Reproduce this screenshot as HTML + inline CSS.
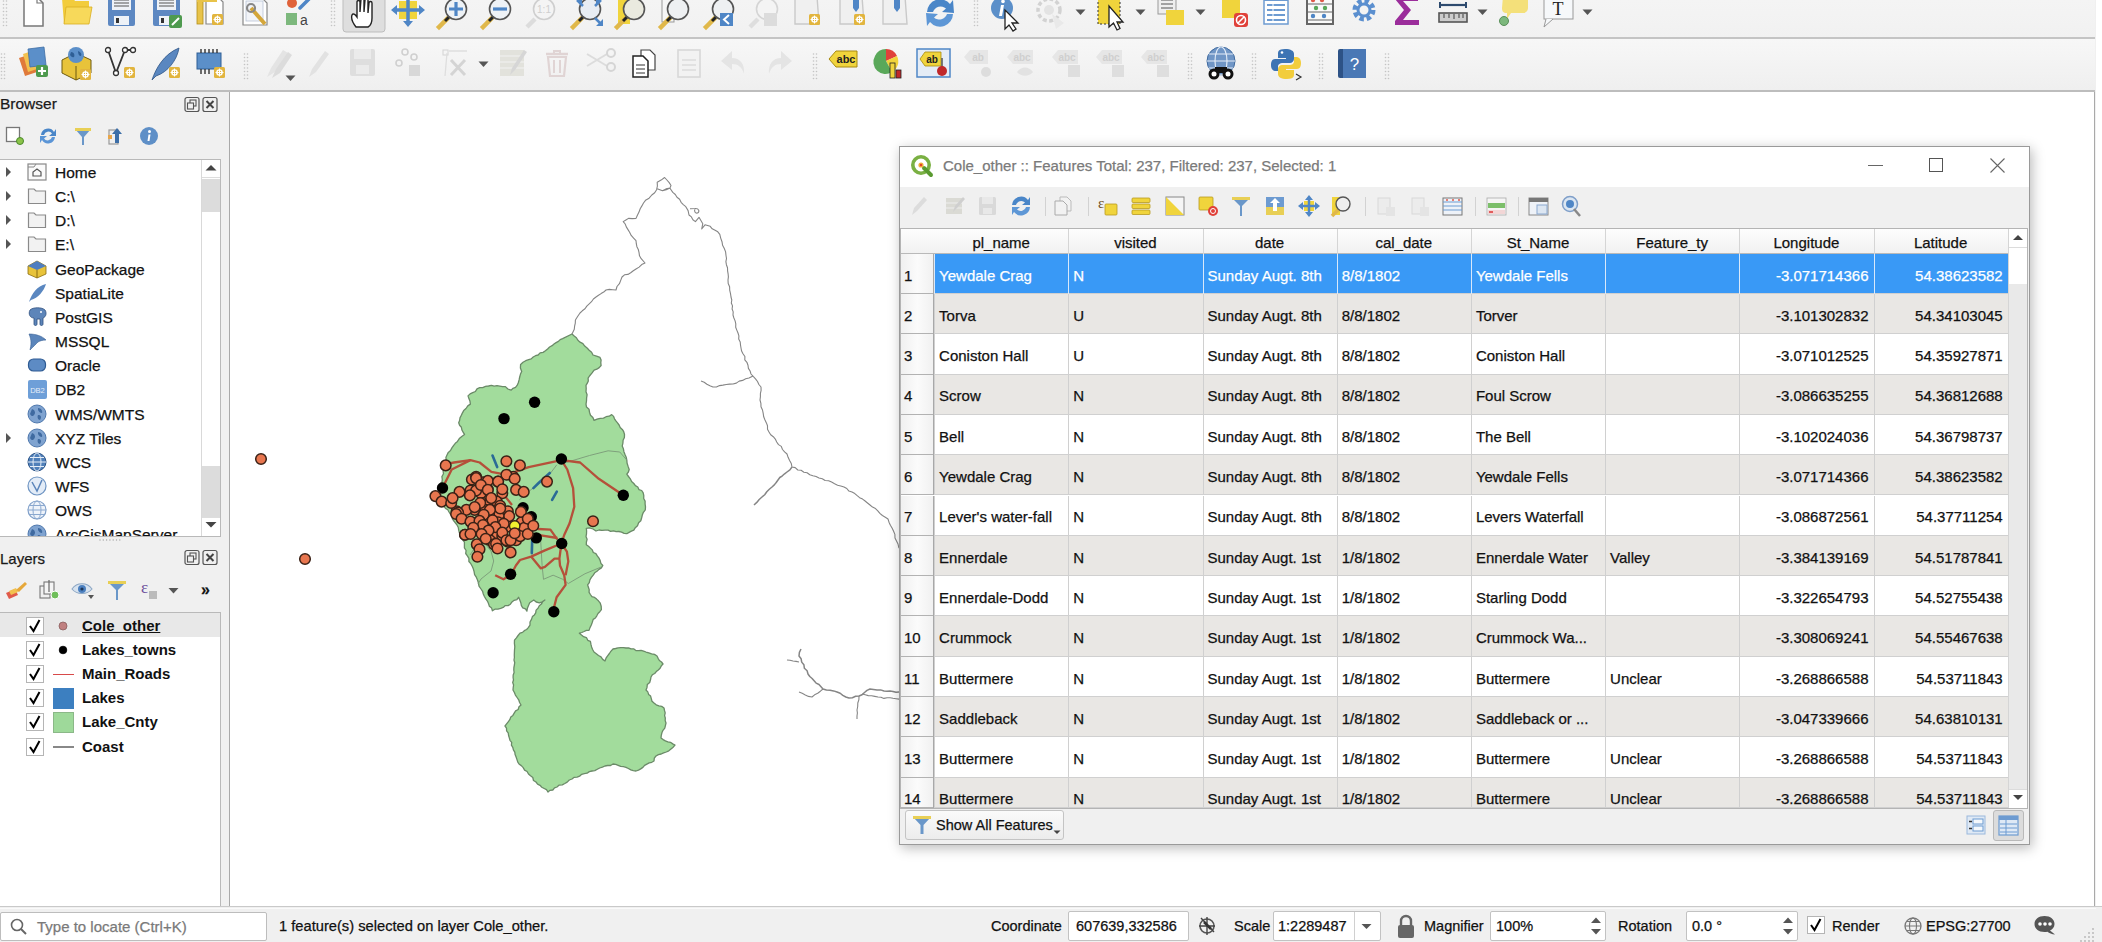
<!DOCTYPE html><html><head><meta charset="utf-8"><title>QGIS</title><style>
*{margin:0;padding:0;box-sizing:border-box}
html,body{width:2102px;height:942px;overflow:hidden;background:#f0f0f0;font-family:"Liberation Sans",sans-serif;font-size:15px;color:#000;position:relative}
.abs{position:absolute}
.t{position:absolute;white-space:nowrap;line-height:1;-webkit-text-stroke:0.25px currentColor}
svg{position:absolute;overflow:visible}
</style></head><body>
<div class="abs" style="left:0;top:0;width:2095px;height:38px;background:linear-gradient(#f4f4f4,#f1f1f1)"></div>
<div class="abs" style="left:0;top:37px;width:2095px;height:2px;background:#c4c4c4"></div>
<div class="abs" style="left:0;top:39px;width:2095px;height:51px;background:linear-gradient(#f7f7f7,#efefef)"></div>
<div class="abs" style="left:0;top:90px;width:2095px;height:2px;background:#bdbdbd"></div>
<div class="abs" style="left:2096px;top:0;width:6px;height:906px;background:#fff"></div>
<svg style="left:17px;top:0px" width="32" height="32"><path d="M7 -3 L20 -3 L26 3 L26 26 L7 26 Z" fill="#fff" stroke="#777" stroke-width="1.5"/><path d="M20 -3 L20 3 L26 3" fill="none" stroke="#777" stroke-width="1.2"/></svg>
<svg style="left:61px;top:0px" width="32" height="32"><path d="M1 -2 L12 -2 L14 1 L28 1 L28 24 L3 24 Z" fill="#f2cc3c"/><path d="M5 7 L31 7 L28 24 L3 24 Z" fill="#f7d95a" stroke="#d9ad1f" stroke-width="0.8"/></svg>
<svg style="left:105px;top:0px" width="32" height="32"><rect x="3" y="-4" width="27" height="30" rx="2" fill="#5d88c2"/><rect x="7" y="-4" width="19" height="14" fill="#eef2f7"/><path d="M9 0 L24 0 M9 3 L24 3 M9 6 L24 6" stroke="#555" stroke-width="1.1"/><rect x="9" y="16" width="15" height="9" fill="#eef2f7"/><rect x="11" y="18" width="3" height="5" fill="#333"/></svg>
<svg style="left:150px;top:0px" width="32" height="32"><rect x="3" y="-4" width="27" height="30" rx="2" fill="#5d88c2"/><rect x="7" y="-4" width="19" height="14" fill="#eef2f7"/><path d="M9 0 L24 0 M9 3 L24 3 M9 6 L24 6" stroke="#555" stroke-width="1.1"/><rect x="9" y="16" width="12" height="9" fill="#eef2f7"/><rect x="11" y="18" width="3" height="5" fill="#333"/><rect x="19" y="15" width="13" height="13" rx="2" fill="#4e9a4e"/><path d="M22 25 L29 18" stroke="#fff" stroke-width="2"/></svg>
<svg style="left:194px;top:0px" width="32" height="32"><path d="M12 -3 L24 -3 L29 2 L29 24 L12 24 Z" fill="#fff" stroke="#888" stroke-width="1.2"/><rect x="3" y="-4" width="6" height="28" fill="#e8c34a" stroke="#b48f1a" stroke-width="0.8"/><rect x="3" y="-4" width="20" height="6" fill="#e8c34a"/><rect x="18" y="14" width="11" height="11" rx="1.5" fill="#e2b53e"/><circle cx="23.5" cy="19.5" r="2.6" fill="none" stroke="#fff" stroke-width="1.4"/><path d="M23.5 15.5 L23.5 23.5 M19.5 19.5 L27.5 19.5" stroke="#fff" stroke-width="1"/></svg>
<svg style="left:239px;top:0px" width="32" height="32"><path d="M4 -3 L22 -3 L28 3 L28 25 L4 25 Z" fill="#fff" stroke="#888" stroke-width="1.2"/><rect x="7" y="1" width="17" height="20" fill="#f2f4f8" stroke="#b8c4d4" stroke-width="0.8"/><path d="M12 8 L26 24" stroke="#d4a63a" stroke-width="4"/><circle cx="12" cy="8" r="4" fill="none" stroke="#888" stroke-width="2.2"/></svg>
<svg style="left:282px;top:0px" width="32" height="32"><circle cx="10" cy="3" r="5" fill="#e0623a"/><path d="M18 8 L28 -2" stroke="#4f86c6" stroke-width="3.5" stroke-linecap="round"/><rect x="4" y="13" width="11" height="12" fill="#7db87d"/><text x="18" y="25" font-size="14" fill="#444" font-family="Liberation Sans">a</text></svg>
<svg style="left:347px;top:0px" width="32" height="32"><rect x="-4" y="-16" width="42" height="48" rx="3" fill="#dedede" stroke="#bdbdbd"/><path d="M9 27 C5 22 4 18 5 15 C6 13 8 14 10 17 L10 2 C10 0 13 0 13 2 L13 12 L14 -1 C14 -3 17 -3 17 -1 L17 12 L18 0 C18 -2 21 -2 21 0 L21 13 L22 3 C22 1 25 1 25 3 L25 18 C25 23 23 26 21 27 Z" fill="#fff" stroke="#222" stroke-width="1.4"/></svg>
<svg style="left:392px;top:0px" width="32" height="32"><rect x="7" y="1" width="18" height="18" fill="#f0d43c"/><path d="M16 -7 L21 -1 L11 -1 Z M16 27 L21 21 L11 21 Z M-1 10 L5 5 L5 15 Z M33 10 L27 5 L27 15 Z" fill="#4f86c6"/><path d="M16 -2 L16 22 M3 10 L29 10" stroke="#4f86c6" stroke-width="3.5"/></svg>
<svg style="left:436px;top:0px" width="32" height="32"><path d="M3 27 L11 19" stroke="#e0b84a" stroke-width="4.5" stroke-linecap="square"/><path d="M9 21 L13 17" stroke="#222" stroke-width="3"/><circle cx="20" cy="9" r="10.5" fill="#eef2f6" stroke="#555" stroke-width="1.6"/><path d="M20 2 L20 16 M13 9 L27 9" stroke="#4f86c6" stroke-width="3.2"/></svg>
<svg style="left:480px;top:0px" width="32" height="32"><path d="M3 27 L11 19" stroke="#e0b84a" stroke-width="4.5" stroke-linecap="square"/><path d="M9 21 L13 17" stroke="#222" stroke-width="3"/><circle cx="20" cy="9" r="10.5" fill="#eef2f6" stroke="#555" stroke-width="1.6"/><path d="M13 9 L27 9" stroke="#4f86c6" stroke-width="3.2"/></svg>
<svg style="left:524px;top:0px" width="32" height="32"><path d="M3 27 L11 19" stroke="#dcdcdc" stroke-width="4.5"/><circle cx="20" cy="9" r="10.5" fill="#f4f4f4" stroke="#cfcfcf" stroke-width="1.6"/><text x="20" y="13" font-size="10" text-anchor="middle" fill="#cfcfcf" font-family="Liberation Sans">1:1</text></svg>
<svg style="left:570px;top:0px" width="32" height="32"><path d="M3 27 L11 19" stroke="#e0b84a" stroke-width="4.5" stroke-linecap="square"/><path d="M9 21 L13 17" stroke="#222" stroke-width="3"/><circle cx="20" cy="9" r="10.5" fill="#e8edf3" stroke="#555" stroke-width="1.6"/><path d="M5 -2 L12 -2 L12 5 Z M33 -2 L26 -2 L26 5 Z M33 26 L26 26 L33 19 Z" fill="#4f86c6"/><path d="M7 0 L13 6 M31 0 L25 6 M31 24 L25 18" stroke="#4f86c6" stroke-width="2.5"/></svg>
<svg style="left:614px;top:0px" width="32" height="32"><rect x="4" y="-4" width="12" height="28" fill="#f0d43c"/><path d="M3 27 L11 19" stroke="#e0b84a" stroke-width="4.5" stroke-linecap="square"/><path d="M9 21 L13 17" stroke="#222" stroke-width="3"/><circle cx="20" cy="9" r="10.5" fill="#eaeadf" stroke="#555" stroke-width="1.6"/></svg>
<svg style="left:658px;top:0px" width="32" height="32"><rect x="4" y="-4" width="12" height="26" fill="#f6f6f6" stroke="#999"/><path d="M3 27 L11 19" stroke="#e0b84a" stroke-width="4.5" stroke-linecap="square"/><path d="M9 21 L13 17" stroke="#222" stroke-width="3"/><circle cx="20" cy="9" r="10.5" fill="#eef0f2" stroke="#555" stroke-width="1.6"/></svg>
<svg style="left:703px;top:0px" width="32" height="32"><path d="M3 27 L11 19" stroke="#e0b84a" stroke-width="4.5" stroke-linecap="square"/><path d="M9 21 L13 17" stroke="#222" stroke-width="3"/><circle cx="20" cy="9" r="10.5" fill="#eef0f2" stroke="#555" stroke-width="1.6"/><rect x="17" y="13" width="13" height="13" fill="#4f86c6"/><path d="M26 15 L21 19.5 L26 24" fill="none" stroke="#fff" stroke-width="2"/></svg>
<svg style="left:747px;top:0px" width="32" height="32"><path d="M3 27 L11 19" stroke="#dedede" stroke-width="4.5"/><circle cx="20" cy="9" r="10.5" fill="#f4f4f4" stroke="#d5d5d5" stroke-width="1.6"/><rect x="17" y="13" width="13" height="13" fill="#dcdcdc"/></svg>
<svg style="left:792px;top:0px" width="32" height="32"><path d="M3 -4 L25 -4 L27 24 L3 24 Z" fill="#f0f0f0" stroke="#c9c9c9" stroke-width="1.4"/><rect x="17" y="14" width="11" height="11" rx="1.5" fill="#e2b53e"/><circle cx="22.5" cy="19.5" r="2.6" fill="none" stroke="#fff" stroke-width="1.4"/><path d="M22.5 15.5 L22.5 23.5 M18.5 19.5 L26.5 19.5" stroke="#fff" stroke-width="1"/></svg>
<svg style="left:837px;top:0px" width="32" height="32"><path d="M3 -4 L25 -4 L27 24 L3 24 Z" fill="#f0f0f0" stroke="#c9c9c9" stroke-width="1.4"/><path d="M16 -4 L16 8 L19 12 L22 8 L22 -4 Z" fill="#4f86c6"/><rect x="17" y="14" width="11" height="11" rx="1.5" fill="#e2b53e"/><circle cx="22.5" cy="19.5" r="2.6" fill="none" stroke="#fff" stroke-width="1.4"/><path d="M22.5 15.5 L22.5 23.5 M18.5 19.5 L26.5 19.5" stroke="#fff" stroke-width="1"/></svg>
<svg style="left:880px;top:0px" width="32" height="32"><path d="M3 -4 L25 -4 L27 24 L3 24 Z" fill="#f0f0f0" stroke="#c9c9c9" stroke-width="1.4"/><path d="M14 -4 L14 8 L17 12 L20 8 L20 -4 Z" fill="#4f86c6"/></svg>
<svg style="left:924px;top:0px" width="32" height="32"><path d="M3 12 A13 13 0 0 1 26 4 L29 0 L30 13 L18 12 L22 8.5 A8 8 0 0 0 9 12 Z" fill="#4a86c8"/><path d="M29 14 A13 13 0 0 1 6 22 L3 26 L2 13 L14 14 L10 17.5 A8 8 0 0 0 23 14 Z" fill="#5e97d6"/></svg>
<svg style="left:989px;top:0px" width="32" height="32"><circle cx="13" cy="8" r="11" fill="#5b8fc9"/><path d="M12 5 L15 5 L13 16 L10 16 Z" fill="#fff"/><circle cx="14" cy="1.5" r="1.8" fill="#fff"/><path d="M16 10 L16 29 L20 25 L24 31 L27 29 L23 23 L29 23 Z" fill="#fff" stroke="#222" stroke-width="1.3"/></svg>
<svg style="left:1034px;top:0px" width="32" height="32"><circle cx="15" cy="10" r="11" fill="none" stroke="#d2d2d2" stroke-width="3.5" stroke-dasharray="4 2.5"/><circle cx="15" cy="10" r="5" fill="#e3e3e3"/><path d="M18 14 L22 29 L30 23 Z" fill="#e9e9e9"/></svg>
<svg style="left:1095px;top:0px" width="32" height="32"><rect x="3" y="-4" width="22" height="28" fill="#f0d43c" stroke="#333" stroke-width="1" stroke-dasharray="2 2"/><path d="M14 6 L14 27 L18.5 23 L22 30 L25 28.5 L22 22 L28 22 Z" fill="#fff" stroke="#222" stroke-width="1.3"/></svg>
<svg style="left:1156px;top:0px" width="32" height="32"><rect x="2" y="-4" width="18" height="18" fill="#eee" stroke="#999"/><path d="M5 0 L17 0 M5 4 L17 4 M5 8 L17 8" stroke="#888" stroke-width="1.6"/><rect x="10" y="10" width="18" height="15" fill="#f0d43c"/></svg>
<svg style="left:1217px;top:0px" width="32" height="32"><rect x="5" y="-4" width="18" height="22" fill="#f0d43c"/><rect x="17" y="13" width="14" height="14" rx="3" fill="#e0413a"/><circle cx="24" cy="20" r="4.5" fill="none" stroke="#fff" stroke-width="1.6"/><path d="M21 23 L27 17" stroke="#fff" stroke-width="1.6"/></svg>
<svg style="left:1260px;top:0px" width="32" height="32"><rect x="4" y="-4" width="24" height="28" fill="#fff" stroke="#6d9bd1" stroke-width="1.5"/><rect x="4" y="-4" width="24" height="5" fill="#6d9bd1"/><path d="M7 5 L25 5 M7 10 L25 10 M7 15 L25 15 M7 20 L25 20" stroke="#6d9bd1" stroke-width="2"/><path d="M13 3 L13 23" stroke="#fff" stroke-width="1"/></svg>
<svg style="left:1304px;top:0px" width="32" height="32"><rect x="3" y="-4" width="26" height="28" fill="#fafafa" stroke="#666" stroke-width="2"/><path d="M3 4 L29 4 M3 12 L29 12 M3 20 L29 20" stroke="#666" stroke-width="1"/><circle cx="9" cy="0" r="2.2" fill="#e05a4a"/><circle cx="18" cy="0" r="2.2" fill="#e05a4a"/><circle cx="12" cy="8" r="2.2" fill="#5aa85a"/><circle cx="21" cy="8" r="2.2" fill="#5aa85a"/><circle cx="9" cy="16" r="2.2" fill="#4f86c6"/><circle cx="20" cy="16" r="2.2" fill="#4f86c6"/></svg>
<svg style="left:1348px;top:0px" width="32" height="32"><circle cx="16" cy="10" r="9" fill="none" stroke="#5b8fcf" stroke-width="5" stroke-dasharray="4.3 2.8"/><circle cx="16" cy="10" r="6" fill="none" stroke="#5b8fcf" stroke-width="3"/></svg>
<svg style="left:1392px;top:0px" width="32" height="32"><path d="M3 -4 L26 -4 L26 1 L11 1 L19 10 L11 20 L27 20 L27 25 L3 25 L3 21 L12 10 L3 -1 Z" fill="#9b2d9b"/></svg>
<svg style="left:1437px;top:0px" width="32" height="32"><path d="M3 5 L29 5" stroke="#2d4a6e" stroke-width="2.2"/><path d="M3 2 L3 8 M29 2 L29 8" stroke="#2d4a6e" stroke-width="2"/><rect x="2" y="13" width="28" height="9" fill="#ccc" stroke="#555" stroke-width="1.6"/><path d="M7 14 L7 18 M12 14 L12 18 M17 14 L17 19 M22 14 L22 18 M26 14 L26 18" stroke="#555" stroke-width="1.2"/></svg>
<svg style="left:1497px;top:0px" width="32" height="32"><path d="M6 -4 L28 -4 C31 -4 31 -2 31 0 L31 8 C31 11 29 13 26 13 L14 13 L10 19 L10 13 C6 13 5 11 5 8 Z" fill="#f4e07a"/><circle cx="7" cy="21" r="4.5" fill="#7db87d" stroke="#5a8f5a"/></svg>
<svg style="left:1541px;top:0px" width="32" height="32"><rect x="3" y="-4" width="29" height="23" fill="#f6f8fa" stroke="#999" stroke-width="1"/><path d="M5 19 L3 27 L12 19" fill="#f6f8fa" stroke="#999"/><text x="17" y="15" font-size="18" text-anchor="middle" fill="#222" font-family="Liberation Serif">T</text></svg>
<svg style="left:1075px;top:9px" width="11" height="7"><path d="M0.5 0.5 L10.5 0.5 L5.5 6 Z" fill="#555"/></svg>
<svg style="left:1135px;top:9px" width="11" height="7"><path d="M0.5 0.5 L10.5 0.5 L5.5 6 Z" fill="#555"/></svg>
<svg style="left:1195px;top:9px" width="11" height="7"><path d="M0.5 0.5 L10.5 0.5 L5.5 6 Z" fill="#555"/></svg>
<svg style="left:1477px;top:9px" width="11" height="7"><path d="M0.5 0.5 L10.5 0.5 L5.5 6 Z" fill="#555"/></svg>
<svg style="left:1582px;top:9px" width="11" height="7"><path d="M0.5 0.5 L10.5 0.5 L5.5 6 Z" fill="#555"/></svg>
<svg style="left:2px;top:0px" width="6" height="30"><circle cx="1.5" cy="1.0" r="0.8" fill="#c4c4c4"/><circle cx="4.5" cy="1.0" r="0.8" fill="#c4c4c4"/><circle cx="1.5" cy="4.5" r="0.8" fill="#c4c4c4"/><circle cx="4.5" cy="4.5" r="0.8" fill="#c4c4c4"/><circle cx="1.5" cy="8.0" r="0.8" fill="#c4c4c4"/><circle cx="4.5" cy="8.0" r="0.8" fill="#c4c4c4"/><circle cx="1.5" cy="11.5" r="0.8" fill="#c4c4c4"/><circle cx="4.5" cy="11.5" r="0.8" fill="#c4c4c4"/><circle cx="1.5" cy="15.0" r="0.8" fill="#c4c4c4"/><circle cx="4.5" cy="15.0" r="0.8" fill="#c4c4c4"/><circle cx="1.5" cy="18.5" r="0.8" fill="#c4c4c4"/><circle cx="4.5" cy="18.5" r="0.8" fill="#c4c4c4"/><circle cx="1.5" cy="22.0" r="0.8" fill="#c4c4c4"/><circle cx="4.5" cy="22.0" r="0.8" fill="#c4c4c4"/><circle cx="1.5" cy="25.5" r="0.8" fill="#c4c4c4"/><circle cx="4.5" cy="25.5" r="0.8" fill="#c4c4c4"/></svg>
<svg style="left:330px;top:0px" width="6" height="30"><circle cx="1.5" cy="1.0" r="0.8" fill="#c4c4c4"/><circle cx="4.5" cy="1.0" r="0.8" fill="#c4c4c4"/><circle cx="1.5" cy="4.5" r="0.8" fill="#c4c4c4"/><circle cx="4.5" cy="4.5" r="0.8" fill="#c4c4c4"/><circle cx="1.5" cy="8.0" r="0.8" fill="#c4c4c4"/><circle cx="4.5" cy="8.0" r="0.8" fill="#c4c4c4"/><circle cx="1.5" cy="11.5" r="0.8" fill="#c4c4c4"/><circle cx="4.5" cy="11.5" r="0.8" fill="#c4c4c4"/><circle cx="1.5" cy="15.0" r="0.8" fill="#c4c4c4"/><circle cx="4.5" cy="15.0" r="0.8" fill="#c4c4c4"/><circle cx="1.5" cy="18.5" r="0.8" fill="#c4c4c4"/><circle cx="4.5" cy="18.5" r="0.8" fill="#c4c4c4"/><circle cx="1.5" cy="22.0" r="0.8" fill="#c4c4c4"/><circle cx="4.5" cy="22.0" r="0.8" fill="#c4c4c4"/><circle cx="1.5" cy="25.5" r="0.8" fill="#c4c4c4"/><circle cx="4.5" cy="25.5" r="0.8" fill="#c4c4c4"/></svg>
<svg style="left:973px;top:0px" width="6" height="30"><circle cx="1.5" cy="1.0" r="0.8" fill="#c4c4c4"/><circle cx="4.5" cy="1.0" r="0.8" fill="#c4c4c4"/><circle cx="1.5" cy="4.5" r="0.8" fill="#c4c4c4"/><circle cx="4.5" cy="4.5" r="0.8" fill="#c4c4c4"/><circle cx="1.5" cy="8.0" r="0.8" fill="#c4c4c4"/><circle cx="4.5" cy="8.0" r="0.8" fill="#c4c4c4"/><circle cx="1.5" cy="11.5" r="0.8" fill="#c4c4c4"/><circle cx="4.5" cy="11.5" r="0.8" fill="#c4c4c4"/><circle cx="1.5" cy="15.0" r="0.8" fill="#c4c4c4"/><circle cx="4.5" cy="15.0" r="0.8" fill="#c4c4c4"/><circle cx="1.5" cy="18.5" r="0.8" fill="#c4c4c4"/><circle cx="4.5" cy="18.5" r="0.8" fill="#c4c4c4"/><circle cx="1.5" cy="22.0" r="0.8" fill="#c4c4c4"/><circle cx="4.5" cy="22.0" r="0.8" fill="#c4c4c4"/><circle cx="1.5" cy="25.5" r="0.8" fill="#c4c4c4"/><circle cx="4.5" cy="25.5" r="0.8" fill="#c4c4c4"/></svg>
<svg style="left:17px;top:48px" width="32" height="32"><path d="M2 10 L14 6 L20 24 L8 28 Z" fill="#e07a3a"/><path d="M6 6 L18 2 L23 20 L11 24 Z" fill="#f2c14e"/><path d="M11 1 L27 -1 L29 17 L13 19 Z" fill="#5b8fc9" stroke="#3e6da5" stroke-width="0.8"/><rect x="19" y="17" width="12" height="12" rx="2" fill="#4e9a4e"/><path d="M25 19 L25 27 M21 23 L29 23" stroke="#fff" stroke-width="2.2"/></svg>
<svg style="left:61px;top:48px" width="32" height="32"><path d="M1 12 L15 5 L30 12 L30 25 L15 32 L1 25 Z" fill="#e8c33a" stroke="#6d5a10" stroke-width="1"/><path d="M15 18 L15 32" stroke="#6d5a10" stroke-width="1"/><circle cx="15" cy="7" r="8" fill="#5b8fc9"/><path d="M10 4 C13 4 14 7 13 9 C11 10 10 8 9 7 Z M17 3 C20 4 21 6 20 8 C18 8 17 6 17 3 Z" fill="#2e5e95"/><rect x="19" y="21" width="11" height="11" rx="1.5" fill="#e2b53e"/><circle cx="24.5" cy="26.5" r="2.6" fill="none" stroke="#fff" stroke-width="1.4"/><path d="M24.5 22.5 L24.5 30.5 M20.5 26.5 L28.5 26.5" stroke="#fff" stroke-width="1"/></svg>
<svg style="left:105px;top:48px" width="32" height="32"><path d="M3 2 L11 25 L20 2 L28 2" fill="none" stroke="#333" stroke-width="1.8"/><circle cx="3" cy="2" r="2.5" fill="#fff" stroke="#333" stroke-width="1.3"/><circle cx="11" cy="25" r="2.5" fill="#fff" stroke="#333" stroke-width="1.3"/><circle cx="20" cy="2" r="2.5" fill="#fff" stroke="#333" stroke-width="1.3"/><circle cx="28" cy="2" r="2.5" fill="#fff" stroke="#333" stroke-width="1.3"/><rect x="19" y="19" width="11" height="11" rx="1.5" fill="#e2b53e"/><circle cx="24.5" cy="24.5" r="2.6" fill="none" stroke="#fff" stroke-width="1.4"/><path d="M24.5 20.5 L24.5 28.5 M20.5 24.5 L28.5 24.5" stroke="#fff" stroke-width="1"/></svg>
<svg style="left:150px;top:48px" width="32" height="32"><path d="M2 32 C6 20 14 6 29 0 C27 12 18 24 6 28 Z" fill="#5a87c0" stroke="#2e5687" stroke-width="0.8"/><rect x="19" y="19" width="11" height="11" rx="1.5" fill="#e2b53e"/><circle cx="24.5" cy="24.5" r="2.6" fill="none" stroke="#fff" stroke-width="1.4"/><path d="M24.5 20.5 L24.5 28.5 M20.5 24.5 L28.5 24.5" stroke="#fff" stroke-width="1"/></svg>
<svg style="left:195px;top:48px" width="32" height="32"><rect x="2" y="5" width="24" height="16" fill="#5b8fc9" stroke="#2e5e95" stroke-width="1"/><path d="M6 1 L6 5 M10 1 L10 5 M14 1 L14 5 M18 1 L18 5 M22 1 L22 5 M6 21 L6 26 M10 21 L10 26 M14 21 L14 26" stroke="#333" stroke-width="1.4"/><rect x="19" y="19" width="11" height="11" rx="1.5" fill="#e2b53e"/><circle cx="24.5" cy="24.5" r="2.6" fill="none" stroke="#fff" stroke-width="1.4"/><path d="M24.5 20.5 L24.5 28.5 M20.5 24.5 L28.5 24.5" stroke="#fff" stroke-width="1"/></svg>
<svg style="left:261px;top:48px" width="32" height="32"><path d="M6 29 L10 20 L22 2 L27 5 L14 24 Z" fill="#e4e4e4"/><path d="M11 30 L15 21 L27 4 L31 7 L19 25 Z" fill="#dcdcdc"/></svg>
<svg style="left:303px;top:48px" width="32" height="32"><path d="M6 29 L9 21 L22 3 L26 6 L13 24 Z" fill="#e2e2e2"/></svg>
<svg style="left:347px;top:48px" width="32" height="32"><rect x="3" y="1" width="25" height="27" rx="2" fill="#dedede"/><rect x="7" y="1" width="17" height="10" fill="#ebebeb"/><rect x="9" y="17" width="13" height="9" fill="#ebebeb"/></svg>
<svg style="left:392px;top:48px" width="32" height="32"><circle cx="13" cy="4" r="3" fill="none" stroke="#d0d0d0" stroke-width="1.6"/><circle cx="22" cy="9" r="3" fill="none" stroke="#d0d0d0" stroke-width="1.6"/><circle cx="7" cy="15" r="3" fill="none" stroke="#d0d0d0" stroke-width="1.6"/><rect x="17" y="17" width="11" height="11" fill="#d8d8d8"/></svg>
<svg style="left:439px;top:48px" width="32" height="32"><rect x="4" y="2" width="5" height="5" fill="none" stroke="#d4d4d4"/><path d="M6 28 L8 5 M10 3 L28 3" stroke="#dedede" stroke-width="1.3"/><path d="M12 12 L26 27 M26 12 L12 27" stroke="#d4d4d4" stroke-width="3"/></svg>
<svg style="left:497px;top:48px" width="32" height="32"><rect x="3" y="2" width="24" height="26" fill="#e2e2dc"/><path d="M3 8 L27 8 M3 14 L27 14 M3 20 L27 20" stroke="#f2f2f2" stroke-width="1.2"/><path d="M13 27 L15 20 L27 2 L30 4 L18 22 Z" fill="#d6d6d6"/></svg>
<svg style="left:541px;top:48px" width="32" height="32"><path d="M5 6 L27 6" stroke="#e0d4d4" stroke-width="2.5"/><path d="M13 6 L13 3 L19 3 L19 6" fill="none" stroke="#e0d4d4" stroke-width="2"/><path d="M7 9 L9 28 L23 28 L25 9 Z" fill="none" stroke="#e0d4d4" stroke-width="2.2"/><path d="M13 12 L13 25 M19 12 L19 25" stroke="#e0d4d4" stroke-width="2"/></svg>
<svg style="left:585px;top:48px" width="32" height="32"><path d="M2 6 L22 18 M2 18 L22 6" stroke="#dcdcdc" stroke-width="2"/><circle cx="26" cy="5" r="4" fill="none" stroke="#d5d5d5" stroke-width="2"/><circle cx="26" cy="19" r="4" fill="none" stroke="#d5d5d5" stroke-width="2"/></svg>
<svg style="left:629px;top:48px" width="32" height="32"><path d="M12 2 L21 2 L26 7 L26 22 L12 22 Z" fill="#fff" stroke="#444" stroke-width="1.2"/><path d="M4 8 L14 8 L19 13 L19 29 L4 29 Z" fill="#fff" stroke="#222" stroke-width="1.5"/><path d="M7 17 L16 17 M7 21 L16 21 M7 25 L16 25" stroke="#333" stroke-width="1.1"/></svg>
<svg style="left:674px;top:48px" width="32" height="32"><rect x="4" y="2" width="22" height="27" fill="#f2f2f2" stroke="#d8d8d8" stroke-width="1.6"/><path d="M8 12 L22 12 M8 17 L22 17 M8 22 L22 22" stroke="#dcdcdc" stroke-width="1.3"/></svg>
<svg style="left:718px;top:48px" width="32" height="32"><path d="M14 3 L3 13 L14 22 L14 16 C20 16 24 19 26 26 C27 16 22 10 14 10 Z" fill="#e4e4e4"/></svg>
<svg style="left:763px;top:48px" width="32" height="32"><path d="M18 3 L29 13 L18 22 L18 16 C12 16 8 19 6 26 C5 16 10 10 18 10 Z" fill="#e4e4e4"/></svg>
<svg style="left:827px;top:48px" width="32" height="32"><path d="M2 11 L9 3 L30 3 L30 19 L9 19 Z" fill="#f0d43c" stroke="#a88a10" stroke-width="1"/><text x="19" y="15" font-size="11" font-weight="bold" text-anchor="middle" fill="#222" font-family="Liberation Sans">abc</text></svg>
<svg style="left:872px;top:48px" width="32" height="32"><path d="M14 13 L14 1 A12 12 0 0 1 25 8 Z" fill="#e0413a"/><path d="M14 13 L25 8 A12 12 0 0 1 20 24 Z" fill="#f0d43c"/><path d="M14 13 L20 24 A12 12 0 0 1 3 8 A12 12 0 0 1 14 1 Z" fill="#5aa85a"/><rect x="18" y="15" width="5" height="15" fill="#f0d43c" stroke="#222" stroke-width="0.8"/><rect x="24" y="22" width="5" height="8" fill="#c0282a" stroke="#222" stroke-width="0.8"/></svg>
<svg style="left:917px;top:48px" width="32" height="32"><rect x="0" y="1" width="33" height="28" fill="#e4ecf6" stroke="#4f86c6" stroke-width="1.5"/><path d="M3 11 L8 4 L24 4 L24 18 L8 18 Z" fill="#f0d43c" stroke="#a88a10" stroke-width="0.8"/><text x="15" y="15" font-size="10" font-weight="bold" text-anchor="middle" fill="#222" font-family="Liberation Sans">ab</text><path d="M25 10 L25 20" stroke="#555" stroke-width="1.5"/><circle cx="25" cy="23" r="5" fill="#c0282a"/></svg>
<svg style="left:962px;top:48px" width="32" height="32"><path d="M2 9 L8 2 L26 2 L26 16 L8 16 Z" fill="#e6e6e6"/><text x="16" y="13" font-size="10" font-weight="bold" text-anchor="middle" fill="#cfcfcf" font-family="Liberation Sans">ab</text><circle cx="24" cy="24" r="5" fill="#ddd"/></svg>
<svg style="left:1005px;top:48px" width="32" height="32"><path d="M2 9 L8 2 L28 2 L28 16 L8 16 Z" fill="#e6e6e6"/><text x="17" y="13" font-size="10" font-weight="bold" text-anchor="middle" fill="#cfcfcf" font-family="Liberation Sans">abc</text><path d="M12 24 C16 18 24 18 28 24 C24 29 16 29 12 24 Z" fill="#e2e2e2"/></svg>
<svg style="left:1050px;top:48px" width="32" height="32"><path d="M2 9 L8 2 L28 2 L28 16 L8 16 Z" fill="#e6e6e6"/><text x="17" y="13" font-size="10" font-weight="bold" text-anchor="middle" fill="#cfcfcf" font-family="Liberation Sans">abc</text><rect x="18" y="17" width="12" height="12" fill="#dedede"/></svg>
<svg style="left:1094px;top:48px" width="32" height="32"><path d="M2 9 L8 2 L28 2 L28 16 L8 16 Z" fill="#e6e6e6"/><text x="17" y="13" font-size="10" font-weight="bold" text-anchor="middle" fill="#cfcfcf" font-family="Liberation Sans">abc</text><rect x="18" y="17" width="12" height="12" fill="#dedede"/></svg>
<svg style="left:1139px;top:48px" width="32" height="32"><path d="M2 9 L8 2 L28 2 L28 16 L8 16 Z" fill="#e6e6e6"/><text x="17" y="13" font-size="10" font-weight="bold" text-anchor="middle" fill="#cfcfcf" font-family="Liberation Sans">abc</text><rect x="18" y="17" width="12" height="12" fill="#dedede"/></svg>
<svg style="left:1205px;top:48px" width="32" height="32"><circle cx="16" cy="13" r="14" fill="#7096c6" stroke="#3f6a9f" stroke-width="1"/><ellipse cx="16" cy="13" rx="6" ry="14" fill="none" stroke="#e3ecf7" stroke-width="1.2"/><path d="M2 13 L30 13 M4 6 L28 6 M4 20 L28 20" stroke="#e3ecf7" stroke-width="1.2"/><circle cx="9" cy="26" r="5.5" fill="#111"/><circle cx="23" cy="26" r="5.5" fill="#111"/><rect x="10" y="19" width="12" height="6" fill="#111"/><circle cx="9" cy="26" r="2.5" fill="#fff"/><circle cx="23" cy="26" r="2.5" fill="#fff"/></svg>
<svg style="left:1270px;top:48px" width="32" height="32"><path d="M15 1 C8 1 8 4 8 6 L8 10 L16 10 L16 11 L5 11 C2 11 1 14 1 17 C1 21 3 23 6 23 L8 23 L8 19 C8 16 10 15 13 15 L20 15 C22 15 24 13 24 11 L24 6 C24 3 21 1 15 1 Z" fill="#3d74b4"/><path d="M17 31 C24 31 24 28 24 26 L24 22 L16 22 L16 21 L27 21 C30 21 31 18 31 15 C31 11 29 9 26 9 L24 9 L24 13 C24 16 22 17 19 17 L12 17 C10 17 8 19 8 21 L8 26 C8 29 11 31 17 31 Z" fill="#f2cd3c"/><circle cx="12" cy="4.5" r="1.3" fill="#fff"/><path d="M26 26 L31 29 L26 32" fill="none" stroke="#333" stroke-width="1.2"/></svg>
<svg style="left:1336px;top:48px" width="32" height="32"><rect x="2" y="1" width="28" height="29" rx="2" fill="#2d5286"/><rect x="7" y="1" width="23" height="29" fill="#4a78b5"/><text x="18.5" y="22" font-size="17" text-anchor="middle" fill="#fff" font-family="Liberation Sans">?</text></svg>
<svg style="left:285px;top:75px" width="11" height="7"><path d="M0.5 0.5 L10.5 0.5 L5.5 6 Z" fill="#555"/></svg>
<svg style="left:478px;top:61px" width="11" height="7"><path d="M0.5 0.5 L10.5 0.5 L5.5 6 Z" fill="#555"/></svg>
<svg style="left:0px;top:53px" width="6" height="30"><circle cx="1.5" cy="1.0" r="0.8" fill="#c4c4c4"/><circle cx="4.5" cy="1.0" r="0.8" fill="#c4c4c4"/><circle cx="1.5" cy="4.5" r="0.8" fill="#c4c4c4"/><circle cx="4.5" cy="4.5" r="0.8" fill="#c4c4c4"/><circle cx="1.5" cy="8.0" r="0.8" fill="#c4c4c4"/><circle cx="4.5" cy="8.0" r="0.8" fill="#c4c4c4"/><circle cx="1.5" cy="11.5" r="0.8" fill="#c4c4c4"/><circle cx="4.5" cy="11.5" r="0.8" fill="#c4c4c4"/><circle cx="1.5" cy="15.0" r="0.8" fill="#c4c4c4"/><circle cx="4.5" cy="15.0" r="0.8" fill="#c4c4c4"/><circle cx="1.5" cy="18.5" r="0.8" fill="#c4c4c4"/><circle cx="4.5" cy="18.5" r="0.8" fill="#c4c4c4"/><circle cx="1.5" cy="22.0" r="0.8" fill="#c4c4c4"/><circle cx="4.5" cy="22.0" r="0.8" fill="#c4c4c4"/><circle cx="1.5" cy="25.5" r="0.8" fill="#c4c4c4"/><circle cx="4.5" cy="25.5" r="0.8" fill="#c4c4c4"/></svg>
<svg style="left:243px;top:53px" width="6" height="30"><circle cx="1.5" cy="1.0" r="0.8" fill="#c4c4c4"/><circle cx="4.5" cy="1.0" r="0.8" fill="#c4c4c4"/><circle cx="1.5" cy="4.5" r="0.8" fill="#c4c4c4"/><circle cx="4.5" cy="4.5" r="0.8" fill="#c4c4c4"/><circle cx="1.5" cy="8.0" r="0.8" fill="#c4c4c4"/><circle cx="4.5" cy="8.0" r="0.8" fill="#c4c4c4"/><circle cx="1.5" cy="11.5" r="0.8" fill="#c4c4c4"/><circle cx="4.5" cy="11.5" r="0.8" fill="#c4c4c4"/><circle cx="1.5" cy="15.0" r="0.8" fill="#c4c4c4"/><circle cx="4.5" cy="15.0" r="0.8" fill="#c4c4c4"/><circle cx="1.5" cy="18.5" r="0.8" fill="#c4c4c4"/><circle cx="4.5" cy="18.5" r="0.8" fill="#c4c4c4"/><circle cx="1.5" cy="22.0" r="0.8" fill="#c4c4c4"/><circle cx="4.5" cy="22.0" r="0.8" fill="#c4c4c4"/><circle cx="1.5" cy="25.5" r="0.8" fill="#c4c4c4"/><circle cx="4.5" cy="25.5" r="0.8" fill="#c4c4c4"/></svg>
<svg style="left:812px;top:53px" width="6" height="30"><circle cx="1.5" cy="1.0" r="0.8" fill="#c4c4c4"/><circle cx="4.5" cy="1.0" r="0.8" fill="#c4c4c4"/><circle cx="1.5" cy="4.5" r="0.8" fill="#c4c4c4"/><circle cx="4.5" cy="4.5" r="0.8" fill="#c4c4c4"/><circle cx="1.5" cy="8.0" r="0.8" fill="#c4c4c4"/><circle cx="4.5" cy="8.0" r="0.8" fill="#c4c4c4"/><circle cx="1.5" cy="11.5" r="0.8" fill="#c4c4c4"/><circle cx="4.5" cy="11.5" r="0.8" fill="#c4c4c4"/><circle cx="1.5" cy="15.0" r="0.8" fill="#c4c4c4"/><circle cx="4.5" cy="15.0" r="0.8" fill="#c4c4c4"/><circle cx="1.5" cy="18.5" r="0.8" fill="#c4c4c4"/><circle cx="4.5" cy="18.5" r="0.8" fill="#c4c4c4"/><circle cx="1.5" cy="22.0" r="0.8" fill="#c4c4c4"/><circle cx="4.5" cy="22.0" r="0.8" fill="#c4c4c4"/><circle cx="1.5" cy="25.5" r="0.8" fill="#c4c4c4"/><circle cx="4.5" cy="25.5" r="0.8" fill="#c4c4c4"/></svg>
<svg style="left:1187px;top:53px" width="6" height="30"><circle cx="1.5" cy="1.0" r="0.8" fill="#c4c4c4"/><circle cx="4.5" cy="1.0" r="0.8" fill="#c4c4c4"/><circle cx="1.5" cy="4.5" r="0.8" fill="#c4c4c4"/><circle cx="4.5" cy="4.5" r="0.8" fill="#c4c4c4"/><circle cx="1.5" cy="8.0" r="0.8" fill="#c4c4c4"/><circle cx="4.5" cy="8.0" r="0.8" fill="#c4c4c4"/><circle cx="1.5" cy="11.5" r="0.8" fill="#c4c4c4"/><circle cx="4.5" cy="11.5" r="0.8" fill="#c4c4c4"/><circle cx="1.5" cy="15.0" r="0.8" fill="#c4c4c4"/><circle cx="4.5" cy="15.0" r="0.8" fill="#c4c4c4"/><circle cx="1.5" cy="18.5" r="0.8" fill="#c4c4c4"/><circle cx="4.5" cy="18.5" r="0.8" fill="#c4c4c4"/><circle cx="1.5" cy="22.0" r="0.8" fill="#c4c4c4"/><circle cx="4.5" cy="22.0" r="0.8" fill="#c4c4c4"/><circle cx="1.5" cy="25.5" r="0.8" fill="#c4c4c4"/><circle cx="4.5" cy="25.5" r="0.8" fill="#c4c4c4"/></svg>
<svg style="left:1251px;top:53px" width="6" height="30"><circle cx="1.5" cy="1.0" r="0.8" fill="#c4c4c4"/><circle cx="4.5" cy="1.0" r="0.8" fill="#c4c4c4"/><circle cx="1.5" cy="4.5" r="0.8" fill="#c4c4c4"/><circle cx="4.5" cy="4.5" r="0.8" fill="#c4c4c4"/><circle cx="1.5" cy="8.0" r="0.8" fill="#c4c4c4"/><circle cx="4.5" cy="8.0" r="0.8" fill="#c4c4c4"/><circle cx="1.5" cy="11.5" r="0.8" fill="#c4c4c4"/><circle cx="4.5" cy="11.5" r="0.8" fill="#c4c4c4"/><circle cx="1.5" cy="15.0" r="0.8" fill="#c4c4c4"/><circle cx="4.5" cy="15.0" r="0.8" fill="#c4c4c4"/><circle cx="1.5" cy="18.5" r="0.8" fill="#c4c4c4"/><circle cx="4.5" cy="18.5" r="0.8" fill="#c4c4c4"/><circle cx="1.5" cy="22.0" r="0.8" fill="#c4c4c4"/><circle cx="4.5" cy="22.0" r="0.8" fill="#c4c4c4"/><circle cx="1.5" cy="25.5" r="0.8" fill="#c4c4c4"/><circle cx="4.5" cy="25.5" r="0.8" fill="#c4c4c4"/></svg>
<svg style="left:1318px;top:53px" width="6" height="30"><circle cx="1.5" cy="1.0" r="0.8" fill="#c4c4c4"/><circle cx="4.5" cy="1.0" r="0.8" fill="#c4c4c4"/><circle cx="1.5" cy="4.5" r="0.8" fill="#c4c4c4"/><circle cx="4.5" cy="4.5" r="0.8" fill="#c4c4c4"/><circle cx="1.5" cy="8.0" r="0.8" fill="#c4c4c4"/><circle cx="4.5" cy="8.0" r="0.8" fill="#c4c4c4"/><circle cx="1.5" cy="11.5" r="0.8" fill="#c4c4c4"/><circle cx="4.5" cy="11.5" r="0.8" fill="#c4c4c4"/><circle cx="1.5" cy="15.0" r="0.8" fill="#c4c4c4"/><circle cx="4.5" cy="15.0" r="0.8" fill="#c4c4c4"/><circle cx="1.5" cy="18.5" r="0.8" fill="#c4c4c4"/><circle cx="4.5" cy="18.5" r="0.8" fill="#c4c4c4"/><circle cx="1.5" cy="22.0" r="0.8" fill="#c4c4c4"/><circle cx="4.5" cy="22.0" r="0.8" fill="#c4c4c4"/><circle cx="1.5" cy="25.5" r="0.8" fill="#c4c4c4"/><circle cx="4.5" cy="25.5" r="0.8" fill="#c4c4c4"/></svg>
<svg style="left:1384px;top:53px" width="6" height="30"><circle cx="1.5" cy="1.0" r="0.8" fill="#c4c4c4"/><circle cx="4.5" cy="1.0" r="0.8" fill="#c4c4c4"/><circle cx="1.5" cy="4.5" r="0.8" fill="#c4c4c4"/><circle cx="4.5" cy="4.5" r="0.8" fill="#c4c4c4"/><circle cx="1.5" cy="8.0" r="0.8" fill="#c4c4c4"/><circle cx="4.5" cy="8.0" r="0.8" fill="#c4c4c4"/><circle cx="1.5" cy="11.5" r="0.8" fill="#c4c4c4"/><circle cx="4.5" cy="11.5" r="0.8" fill="#c4c4c4"/><circle cx="1.5" cy="15.0" r="0.8" fill="#c4c4c4"/><circle cx="4.5" cy="15.0" r="0.8" fill="#c4c4c4"/><circle cx="1.5" cy="18.5" r="0.8" fill="#c4c4c4"/><circle cx="4.5" cy="18.5" r="0.8" fill="#c4c4c4"/><circle cx="1.5" cy="22.0" r="0.8" fill="#c4c4c4"/><circle cx="4.5" cy="22.0" r="0.8" fill="#c4c4c4"/><circle cx="1.5" cy="25.5" r="0.8" fill="#c4c4c4"/><circle cx="4.5" cy="25.5" r="0.8" fill="#c4c4c4"/></svg>
<div class="t" style="left:0;top:96px;font-size:15.5px;color:#1a1a1a">Browser</div>
<div class="t" style="left:0;top:551px;font-size:15px;color:#1a1a1a">Layers</div>
<div class="abs" style="left:229px;top:92px;width:1px;height:815px;background:#a9a9a9"></div>
<div class="abs" style="left:-1px;top:159px;width:222px;height:378px;background:#fff;border:1px solid #b9b9b9"></div>
<div class="abs" style="left:-1px;top:612px;width:222px;height:296px;background:#fff;border:1px solid #b9b9b9"></div>
<svg style="left:184px;top:97px" width="34" height="15"><rect x="1" y="0.5" width="14" height="14" rx="2" fill="none" stroke="#555" stroke-width="1.2"/><rect x="6" y="3" width="6" height="6" fill="none" stroke="#555" stroke-width="1.1"/><rect x="3.5" y="6" width="6" height="6" fill="#f0f0f0" stroke="#555" stroke-width="1.1"/><rect x="19" y="0.5" width="14" height="14" rx="2" fill="none" stroke="#555" stroke-width="1.2"/><path d="M22.5 4 L29.5 11 M29.5 4 L22.5 11" stroke="#444" stroke-width="2"/></svg>
<svg style="left:184px;top:550px" width="34" height="15"><rect x="1" y="0.5" width="14" height="14" rx="2" fill="none" stroke="#555" stroke-width="1.2"/><rect x="6" y="3" width="6" height="6" fill="none" stroke="#555" stroke-width="1.1"/><rect x="3.5" y="6" width="6" height="6" fill="#f0f0f0" stroke="#555" stroke-width="1.1"/><rect x="19" y="0.5" width="14" height="14" rx="2" fill="none" stroke="#555" stroke-width="1.2"/><path d="M22.5 4 L29.5 11 M29.5 4 L22.5 11" stroke="#444" stroke-width="2"/></svg>
<svg style="left:5px;top:126px" width="20" height="20"><rect x="1.5" y="1.5" width="13" height="14" fill="#fff" stroke="#777" stroke-width="1.3"/><circle cx="15" cy="15" r="3.5" fill="#8bc34a" stroke="#4a8a2a" stroke-width="1"/></svg>
<svg style="left:38px;top:126px" width="20" height="20"><path d="M3 9 A7 7 0 0 1 16 6 L18 3 L18 10 L11 10 L14 7.5 A4.5 4.5 0 0 0 6 9 Z" fill="#4a86c8"/><path d="M17 11 A7 7 0 0 1 4 14 L2 17 L2 10 L9 10 L6 12.5 A4.5 4.5 0 0 0 14 11 Z" fill="#5b95d6"/></svg>
<svg style="left:73px;top:126px" width="20" height="20"><path d="M2 3 L18 3 L11 11 L11 19 L9 19 L9 11 Z" fill="#6a97c9"/><rect x="2" y="2" width="16" height="3" fill="#e8cf55"/></svg>
<svg style="left:106px;top:125px" width="22" height="22"><rect x="3" y="5" width="9" height="14" fill="none" stroke="#999" stroke-width="1.2"/><path d="M11 3 L16 9 L13 9 L13 18 L9 18 L9 9 L6 9 Z" fill="#3d6fa8"/><rect x="2" y="10" width="4" height="4" fill="#e8a64a"/></svg>
<svg style="left:139px;top:126px" width="20" height="20"><circle cx="10" cy="10" r="9" fill="#5e8fc7"/><circle cx="10.5" cy="5.5" r="1.5" fill="#fff"/><path d="M9.5 8.5 L11.5 8.5 L10.5 15 L8.5 15 Z" fill="#fff"/></svg>
<svg style="left:5px;top:167.0px" width="8" height="10"><path d="M1 0 L6 5 L1 10 Z" fill="#555"/></svg>
<svg style="left:27px;top:162.0px" width="21" height="21"><rect x="1" y="2" width="18" height="16" fill="#fafafa" stroke="#888" stroke-width="1.2"/><path d="M1 5 L7 5 L9 2" fill="none" stroke="#888"/><path d="M6 14 L6 10 L10 7 L14 10 L14 14 Z" fill="none" stroke="#555" stroke-width="1.2"/></svg>
<div class="t" style="left:55px;top:165.0px;font-size:15.5px;color:#111">Home</div>
<svg style="left:5px;top:191.2px" width="8" height="10"><path d="M1 0 L6 5 L1 10 Z" fill="#555"/></svg>
<svg style="left:27px;top:186.2px" width="21" height="21"><path d="M1.5 3 L7 3 L9 5 L18.5 5 L18.5 17.5 L1.5 17.5 Z" fill="#f2f2f2" stroke="#8a8a8a" stroke-width="1.2"/></svg>
<div class="t" style="left:55px;top:189.2px;font-size:15.5px;color:#111">C:\</div>
<svg style="left:5px;top:215.3px" width="8" height="10"><path d="M1 0 L6 5 L1 10 Z" fill="#555"/></svg>
<svg style="left:27px;top:210.3px" width="21" height="21"><path d="M1.5 3 L7 3 L9 5 L18.5 5 L18.5 17.5 L1.5 17.5 Z" fill="#f2f2f2" stroke="#8a8a8a" stroke-width="1.2"/></svg>
<div class="t" style="left:55px;top:213.3px;font-size:15.5px;color:#111">D:\</div>
<svg style="left:5px;top:239.4px" width="8" height="10"><path d="M1 0 L6 5 L1 10 Z" fill="#555"/></svg>
<svg style="left:27px;top:234.4px" width="21" height="21"><path d="M1.5 3 L7 3 L9 5 L18.5 5 L18.5 17.5 L1.5 17.5 Z" fill="#f2f2f2" stroke="#8a8a8a" stroke-width="1.2"/></svg>
<div class="t" style="left:55px;top:237.4px;font-size:15.5px;color:#111">E:\</div>
<svg style="left:27px;top:258.6px" width="21" height="21"><path d="M1 7 L10 2 L19 7 L19 15 L10 19 L1 15 Z" fill="#e8c33a" stroke="#8a6d10" stroke-width="0.8"/><path d="M1 7 L10 11 L19 7 L10 2 Z" fill="#4f7ec0"/><path d="M10 11 L10 19" stroke="#8a6d10"/></svg>
<div class="t" style="left:55px;top:261.6px;font-size:15.5px;color:#111">GeoPackage</div>
<svg style="left:27px;top:282.8px" width="21" height="21"><path d="M2 19 C5 10 10 3 19 1 C17 8 11 15 4 17 Z" fill="#5a87c0"/></svg>
<div class="t" style="left:55px;top:285.8px;font-size:15.5px;color:#111">SpatiaLite</div>
<svg style="left:27px;top:306.9px" width="21" height="21"><path d="M3 3 C6 0 15 0 18 3 C20 6 19 10 16 11 L16 17 C16 19 13 19 13 17 L13 12 L10 12 L10 17 C10 19 7 19 7 17 L7 11 C3 11 1 7 3 3 Z" fill="#5d85b9" stroke="#2e4f7d" stroke-width="0.8"/><circle cx="14" cy="5" r="1" fill="#fff"/></svg>
<div class="t" style="left:55px;top:309.9px;font-size:15.5px;color:#111">PostGIS</div>
<svg style="left:27px;top:331.0px" width="21" height="21"><path d="M2 3 C9 3 15 5 19 9 C15 9 13 10 11 11 C9 13 6 16 3 19 C4 14 5 10 2 3 Z" fill="#5b85bb" stroke="#3a6196" stroke-width="0.6"/></svg>
<div class="t" style="left:55px;top:334.0px;font-size:15.5px;color:#111">MSSQL</div>
<svg style="left:27px;top:355.2px" width="21" height="21"><rect x="1.5" y="4" width="17" height="12" rx="5" fill="#5d8bc4" stroke="#2f5b93" stroke-width="1.2"/></svg>
<div class="t" style="left:55px;top:358.2px;font-size:15.5px;color:#111">Oracle</div>
<svg style="left:27px;top:379.4px" width="21" height="21"><rect x="1" y="1" width="19" height="19" rx="2" fill="#6e9fd8"/><text x="10.5" y="14" font-size="7.5" fill="#e6eef8" text-anchor="middle" font-family="Liberation Sans">DB2</text></svg>
<div class="t" style="left:55px;top:382.4px;font-size:15.5px;color:#111">DB2</div>
<svg style="left:27px;top:403.5px" width="21" height="21"><circle cx="10" cy="10" r="9" fill="#7fa3d0" stroke="#4f78ad" stroke-width="1"/><path d="M5 5 C8 6 9 9 7 11 C6 13 4 12 3 10 Z M11 4 C14 4 16 7 15 9 C13 9 12 8 11 6 Z M11 11 C14 11 15 13 13 16 C11 16 10 13 11 11 Z" fill="#3f6aa0"/></svg>
<div class="t" style="left:55px;top:406.5px;font-size:15.5px;color:#111">WMS/WMTS</div>
<svg style="left:5px;top:432.6px" width="8" height="10"><path d="M1 0 L6 5 L1 10 Z" fill="#555"/></svg>
<svg style="left:27px;top:427.6px" width="21" height="21"><circle cx="10" cy="10" r="9" fill="#7fa3d0" stroke="#4f78ad" stroke-width="1"/><path d="M5 5 C8 6 9 9 7 11 C6 13 4 12 3 10 Z M11 4 C14 4 16 7 15 9 C13 9 12 8 11 6 Z M11 11 C14 11 15 13 13 16 C11 16 10 13 11 11 Z" fill="#3f6aa0"/></svg>
<div class="t" style="left:55px;top:430.6px;font-size:15.5px;color:#111">XYZ Tiles</div>
<svg style="left:27px;top:451.8px" width="21" height="21"><circle cx="10" cy="10" r="9" fill="#4f7fb9" stroke="#2b5488" stroke-width="1"/><ellipse cx="10" cy="10" rx="4" ry="9" fill="none" stroke="#e5eef8" stroke-width="1"/><path d="M1 10 L19 10 M3 5.5 L17 5.5 M3 14.5 L17 14.5" stroke="#e5eef8" stroke-width="1"/></svg>
<div class="t" style="left:55px;top:454.8px;font-size:15.5px;color:#111">WCS</div>
<svg style="left:27px;top:475.9px" width="21" height="21"><circle cx="10" cy="10" r="9" fill="#e3ecf7" stroke="#6f95c3" stroke-width="1.2"/><path d="M5 6 L10 15 L15 4" fill="none" stroke="#5b85bb" stroke-width="1.5"/></svg>
<div class="t" style="left:55px;top:478.9px;font-size:15.5px;color:#111">WFS</div>
<svg style="left:27px;top:500.1px" width="21" height="21"><circle cx="10" cy="10" r="9" fill="#eef3fa" stroke="#7f9fc9" stroke-width="1.2"/><ellipse cx="10" cy="10" rx="4" ry="9" fill="none" stroke="#8aa8cf" stroke-width="1"/><path d="M1 10 L19 10 M3 5.5 L17 5.5 M3 14.5 L17 14.5" stroke="#8aa8cf" stroke-width="1"/></svg>
<div class="t" style="left:55px;top:503.1px;font-size:15.5px;color:#111">OWS</div>
<svg style="left:27px;top:524.2px" width="21" height="21"><circle cx="10" cy="10" r="9" fill="#7fa3d0" stroke="#4f78ad" stroke-width="1"/><path d="M5 5 C8 6 9 9 7 11 C6 13 4 12 3 10 Z M11 4 C14 4 16 7 15 9 C13 9 12 8 11 6 Z M11 11 C14 11 15 13 13 16 C11 16 10 13 11 11 Z" fill="#3f6aa0"/></svg>
<div class="t" style="left:55px;top:527.2px;font-size:15.5px;color:#111">ArcGisMapServer</div>
<div class="abs" style="left:0;top:536px;width:229px;height:12px;background:#f0f0f0"></div>
<div class="abs" style="left:-1px;top:536px;width:222px;height:1px;background:#b9b9b9"></div>
<div class="abs" style="left:201px;top:160px;width:19px;height:376px;background:#fff;border-left:1px solid #d9d9d9"></div>
<div class="abs" style="left:202px;top:179px;width:18px;height:33px;background:#dcdcdc"></div>
<div class="abs" style="left:202px;top:466px;width:18px;height:51px;background:#dcdcdc"></div>
<div class="abs" style="left:202px;top:177px;width:18px;height:1px;background:#dddddd"></div>
<div class="abs" style="left:202px;top:517px;width:18px;height:1px;background:#dddddd"></div>
<svg style="left:205px;top:164px" width="12" height="8"><path d="M0.5 6.5 L6 1 L11.5 6.5 Z" fill="#444"/></svg>
<svg style="left:205px;top:521px" width="12" height="8"><path d="M0.5 1 L6 6.5 L11.5 1 Z" fill="#444"/></svg>
<svg style="left:98px;top:538px" width="24" height="4"><circle cx="2.0" cy="2" r="0.7" fill="#aaa"/><circle cx="5.3" cy="2" r="0.7" fill="#aaa"/><circle cx="8.6" cy="2" r="0.7" fill="#aaa"/><circle cx="11.9" cy="2" r="0.7" fill="#aaa"/><circle cx="15.2" cy="2" r="0.7" fill="#aaa"/><circle cx="18.5" cy="2" r="0.7" fill="#aaa"/><circle cx="21.8" cy="2" r="0.7" fill="#aaa"/></svg>
<svg style="left:4px;top:579px" width="24" height="22"><path d="M2 14 L11 10 L14 16 L5 20 Z" fill="#e05a4a"/><path d="M5 12 L12 9 L14 13 L7 16 Z" fill="#f2c14e"/><path d="M12 11 L21 3 L23 5 L15 13 Z" fill="#e6a83a"/></svg>
<svg style="left:38px;top:578px" width="24" height="24"><rect x="2" y="8" width="10" height="12" fill="none" stroke="#777" stroke-width="1.1"/><rect x="6" y="4" width="10" height="12" fill="#f5f5f5" stroke="#777" stroke-width="1.1"/><path d="M11 2 L11 14" stroke="#666" stroke-width="1.2"/><circle cx="17" cy="17" r="4" fill="#6fbf5a" stroke="#fff" stroke-width="1"/></svg>
<svg style="left:71px;top:581px" width="26" height="20"><path d="M1 8 C6 1 16 1 21 8 C16 14 6 14 1 8 Z" fill="#d6e2ef" stroke="#8da7c4" stroke-width="1.1"/><circle cx="11" cy="8" r="4" fill="#4a7fbf"/><circle cx="11" cy="8" r="1.6" fill="#1d3557"/><path d="M17 14 L23 14 L20 18 Z" fill="#555"/></svg>
<svg style="left:106px;top:579px" width="22" height="22"><path d="M2 3 L20 3 L12 11 L12 21 L10 21 L10 11 Z" fill="#6a97c9"/><rect x="2" y="2" width="18" height="3" fill="#e8cf55"/></svg>
<svg style="left:140px;top:579px" width="24" height="22"><text x="1" y="14" font-size="17" fill="#6b4d9a" font-family="Liberation Serif">&#949;</text><rect x="9" y="12" width="8" height="8" fill="#bbb"/></svg>
<svg style="left:168px;top:587px" width="12" height="8"><path d="M0.5 1 L10.5 1 L5.5 6.5 Z" fill="#555"/></svg>
<div class="t" style="left:201px;top:582px;font-size:16px;font-weight:bold;color:#111;letter-spacing:-1px">&#187;</div>
<div class="abs" style="left:0;top:613px;width:220px;height:24px;background:#e8e8e8"></div>
<svg style="left:26px;top:617.0px" width="19" height="19"><rect x="0.5" y="0.5" width="17" height="17" fill="#fff" stroke="#b5b5b5"/><path d="M4 9 L7.5 14 L13.5 3" fill="none" stroke="#000" stroke-width="2"/></svg>
<svg style="left:55px;top:618.0px" width="16" height="16"><circle cx="8" cy="8" r="4.0" fill="#c08080" stroke="#8a6060" stroke-width="0.8"/></svg>
<div class="t" style="left:82px;top:618.0px;font-size:15px;font-weight:bold;color:#111;-webkit-text-stroke:0;text-decoration:underline;">Cole_other</div>
<svg style="left:26px;top:641.1px" width="19" height="19"><rect x="0.5" y="0.5" width="17" height="17" fill="#fff" stroke="#b5b5b5"/><path d="M4 9 L7.5 14 L13.5 3" fill="none" stroke="#000" stroke-width="2"/></svg>
<svg style="left:55px;top:642.1px" width="16" height="16"><circle cx="8" cy="8" r="3.8" fill="#000" stroke="#000" stroke-width="0.8"/></svg>
<div class="t" style="left:82px;top:642.1px;font-size:15px;font-weight:bold;color:#111;-webkit-text-stroke:0;">Lakes_towns</div>
<svg style="left:26px;top:665.2px" width="19" height="19"><rect x="0.5" y="0.5" width="17" height="17" fill="#fff" stroke="#b5b5b5"/><path d="M4 9 L7.5 14 L13.5 3" fill="none" stroke="#000" stroke-width="2"/></svg>
<div class="abs" style="left:53px;top:673.7px;width:21px;height:1.5px;background:#d84a4a"></div>
<div class="t" style="left:82px;top:666.2px;font-size:15px;font-weight:bold;color:#111;-webkit-text-stroke:0;">Main_Roads</div>
<svg style="left:26px;top:689.3px" width="19" height="19"><rect x="0.5" y="0.5" width="17" height="17" fill="#fff" stroke="#b5b5b5"/><path d="M4 9 L7.5 14 L13.5 3" fill="none" stroke="#000" stroke-width="2"/></svg>
<div class="abs" style="left:53px;top:688.3px;width:21px;height:21px;background:#3c7fc0"></div>
<div class="t" style="left:82px;top:690.3px;font-size:15px;font-weight:bold;color:#111;-webkit-text-stroke:0;">Lakes</div>
<svg style="left:26px;top:713.4px" width="19" height="19"><rect x="0.5" y="0.5" width="17" height="17" fill="#fff" stroke="#b5b5b5"/><path d="M4 9 L7.5 14 L13.5 3" fill="none" stroke="#000" stroke-width="2"/></svg>
<div class="abs" style="left:53px;top:712.4px;width:21px;height:21px;background:#9ed99a;border:1px solid #8bb888"></div>
<div class="t" style="left:82px;top:714.4px;font-size:15px;font-weight:bold;color:#111;-webkit-text-stroke:0;">Lake_Cnty</div>
<svg style="left:26px;top:737.5px" width="19" height="19"><rect x="0.5" y="0.5" width="17" height="17" fill="#fff" stroke="#b5b5b5"/><path d="M4 9 L7.5 14 L13.5 3" fill="none" stroke="#000" stroke-width="2"/></svg>
<div class="abs" style="left:53px;top:746.0px;width:21px;height:1.5px;background:#888"></div>
<div class="t" style="left:82px;top:738.5px;font-size:15px;font-weight:bold;color:#111;-webkit-text-stroke:0;">Coast</div>
<div class="abs" style="left:230px;top:92px;width:1865px;height:814px;background:#fff;border-right:1px solid #a9a9a9"></div>
<svg style="left:230px;top:92px" width="1865" height="814" viewBox="230 92 1865 814"><polygon points="572.0,334.0 574.2,335.9 576.4,337.7 577.9,340.3 580.1,342.2 582.9,343.6 584.7,346.1 587.1,348.0 589.2,350.2 591.6,352.2 593.0,355.0 596.5,356.2 600.0,357.4 601.1,360.0 600.8,362.8 601.1,365.5 599.2,367.6 596.8,369.2 594.1,370.2 591.9,373.2 589.5,376.0 588.1,378.2 588.3,380.9 587.3,383.2 586.0,385.4 586.2,388.5 586.0,391.7 587.1,394.7 586.6,397.8 586.5,401.0 586.0,404.1 586.5,407.1 589.0,409.2 589.5,412.2 590.5,415.2 592.9,417.5 594.1,420.4 597.1,419.1 600.2,418.3 603.5,418.1 606.1,416.7 609.2,416.2 611.7,414.6 613.6,416.4 614.5,418.8 615.9,420.9 617.5,422.8 619.1,425.0 620.2,427.5 622.3,429.4 623.7,431.7 624.5,434.4 624.4,437.4 623.1,440.2 622.9,443.2 622.2,446.1 623.4,448.8 623.9,451.7 625.0,454.5 626.2,457.2 626.8,460.1 627.1,463.3 628.1,466.4 629.2,469.5 628.4,472.0 626.8,474.1 628.5,476.5 630.3,478.8 631.6,481.5 633.8,483.5 635.4,485.6 637.8,487.0 638.9,489.6 641.7,490.5 643.2,492.8 643.8,495.6 643.7,498.5 645.1,501.1 645.1,504.0 645.5,506.8 645.3,509.8 643.4,512.3 642.3,515.1 641.6,518.0 640.8,520.8 638.6,522.8 637.5,525.7 635.3,527.7 633.8,530.2 631.4,531.2 629.1,532.4 626.8,533.7 624.1,533.3 621.6,532.2 618.9,531.5 616.1,531.7 613.5,530.9 610.6,531.4 608.1,530.2 605.1,530.1 602.0,530.4 599.0,530.0 596.0,531.0 593.0,529.0 589.5,527.9 586.3,528.3 586.6,531.0 586.5,533.8 586.0,536.5 587.1,539.3 586.4,542.0 586.3,544.8 588.5,546.3 590.4,548.1 592.3,549.9 593.3,552.5 595.9,553.6 597.3,555.9 599.0,558.1 600.2,560.6 600.9,563.4 602.8,565.5 601.4,567.9 599.0,569.4 597.0,571.3 594.7,572.8 593.2,575.2 591.4,577.4 589.9,579.8 589.3,582.7 587.6,584.9 588.4,587.3 589.2,589.6 589.1,592.3 590.4,594.5 591.9,596.7 594.6,597.4 596.6,599.1 598.4,600.8 600.1,602.8 601.2,606.2 601.4,609.7 599.8,611.7 598.0,613.5 596.8,615.8 595.4,618.0 593.2,619.4 592.3,622.2 591.3,625.0 590.0,627.6 589.0,630.4 586.4,630.4 584.1,631.5 581.8,632.5 579.4,633.2 581.5,635.0 583.6,636.7 586.4,637.5 587.8,640.3 590.4,641.4 590.9,644.2 591.6,646.9 592.6,649.5 594.0,652.0 596.3,653.7 598.5,655.5 601.0,656.9 602.7,659.4 605.0,661.0 606.0,658.2 607.6,655.8 609.4,653.5 611.0,651.1 613.0,649.0 615.6,648.5 618.1,647.9 620.7,647.6 623.4,647.6 626.0,648.0 628.6,647.9 631.0,648.8 633.6,648.8 635.9,650.6 638.5,650.7 641.1,650.4 643.6,651.1 646.0,652.0 648.8,652.8 651.6,653.8 654.5,654.4 657.0,656.0 658.1,658.3 659.4,660.5 661.5,662.0 663.0,664.0 661.3,665.9 660.1,668.2 658.3,670.0 656.3,671.6 654.7,673.5 652.3,674.8 651.0,677.0 650.5,679.8 649.7,682.5 647.3,684.5 647.0,687.4 646.0,690.0 647.8,691.9 648.6,694.4 650.6,696.1 651.3,698.7 652.0,701.2 654.0,703.0 656.2,704.8 658.9,705.8 661.7,706.4 664.0,708.0 664.5,710.5 665.2,712.9 664.6,715.6 665.3,718.0 665.2,720.6 666.0,723.0 665.4,725.6 664.8,728.1 663.0,730.3 661.9,732.8 661.3,735.3 661.0,738.0 663.1,739.6 665.4,740.8 667.8,741.8 670.5,742.3 672.7,743.9 675.0,745.0 673.2,747.2 671.0,749.0 668.8,750.8 666.3,752.0 663.6,752.8 661.2,754.0 658.4,754.6 656.0,756.0 654.3,758.2 654.0,761.0 651.8,762.3 649.2,762.9 646.9,764.1 644.6,765.4 642.9,767.4 640.7,768.9 638.5,770.1 636.0,771.0 633.3,770.7 630.8,769.9 628.4,768.5 626.0,767.3 623.4,766.6 620.7,766.4 618.2,765.3 615.7,764.3 613.0,764.0 610.6,765.5 607.7,765.5 604.9,766.0 602.4,767.1 599.7,768.0 597.3,769.3 594.8,770.6 592.0,771.0 589.3,771.6 587.1,773.2 584.3,773.6 581.7,774.3 579.6,776.2 577.1,777.1 574.2,777.3 572.0,779.0 569.3,780.0 567.2,782.1 564.8,783.5 562.3,784.8 559.2,785.1 557.0,787.0 554.5,787.8 552.8,790.0 550.0,790.3 548.0,792.0 546.5,789.7 544.2,788.5 541.8,787.2 540.0,785.3 537.6,784.1 536.0,782.0 533.5,780.5 532.8,777.5 530.5,775.8 528.5,774.0 527.1,771.5 524.6,770.1 523.2,767.6 521.3,765.6 519.0,764.0 517.7,761.8 516.9,759.4 516.1,757.0 515.1,754.6 514.8,752.1 513.4,749.9 512.8,747.4 511.4,745.2 511.7,742.4 510.0,740.3 509.3,737.9 508.6,735.5 508.2,732.9 506.6,730.8 506.5,728.1 505.0,726.0 506.6,723.9 508.2,721.8 509.8,719.7 510.8,717.1 512.9,715.4 514.2,713.1 515.6,710.8 518.2,709.5 519.0,706.8 521.0,705.0 519.6,702.5 518.7,699.8 517.1,697.5 515.4,695.1 514.4,692.5 513.0,690.0 513.2,687.5 513.6,685.0 512.7,682.5 513.5,680.0 513.1,677.5 513.2,675.0 514.1,672.5 513.8,670.0 513.9,667.5 514.4,665.0 514.7,662.5 514.0,660.0 514.4,657.5 514.3,655.0 514.4,652.5 514.5,650.0 514.8,646.7 514.4,643.4 514.5,640.1 516.4,637.8 518.1,635.5 520.0,633.2 522.5,632.4 524.3,630.7 526.6,629.5 528.3,627.6 530.0,625.1 530.0,622.0 531.5,619.4 532.4,616.6 534.4,614.9 535.7,612.8 536.1,610.1 538.0,608.3 539.3,605.8 541.4,604.1 542.6,601.6 544.9,600.0 542.3,601.8 539.3,602.8 536.2,602.0 533.8,600.0 529.7,602.8 528.5,605.5 527.4,608.2 526.9,611.1 525.5,608.8 522.8,607.8 521.4,605.6 520.8,602.7 519.8,600.0 518.6,597.3 516.9,599.5 514.1,600.3 512.0,601.9 510.4,604.2 508.1,605.6 505.3,605.6 503.2,607.4 500.7,608.3 497.9,609.2 494.9,609.2 492.4,610.8 491.6,608.1 489.4,606.2 488.5,603.6 487.4,601.1 485.8,598.8 484.4,596.5 483.3,594.0 482.6,591.3 481.0,589.0 479.0,586.2 478.4,582.8 477.5,580.0 476.3,577.2 474.6,574.7 474.1,571.7 473.3,568.8 472.2,566.2 470.8,563.7 468.9,561.5 468.9,558.3 467.4,555.8 465.7,553.5 466.1,550.5 464.4,547.8 464.4,544.9 464.4,542.0 462.6,539.9 462.6,537.1 460.7,535.0 459.4,532.8 458.7,530.2 458.3,527.5 457.1,525.2 455.5,523.0 453.9,521.0 452.4,518.9 452.2,516.1 450.4,514.1 449.0,512.0 447.8,509.8 445.5,508.4 443.9,506.4 443.0,504.0 442.6,501.4 441.5,499.0 440.2,496.7 440.9,493.8 439.7,491.4 438.8,489.0 440.1,486.8 439.9,484.0 442.0,482.1 442.3,479.5 441.9,476.6 443.5,473.8 443.1,470.9 443.5,468.0 444.0,465.3 445.0,462.8 446.3,460.4 445.9,457.5 447.0,455.0 448.3,452.4 450.5,450.5 451.9,447.9 453.5,445.6 455.3,443.3 457.5,441.4 459.3,438.6 461.8,436.4 464.5,434.4 463.1,432.2 461.9,429.9 461.4,427.3 459.6,425.3 458.7,422.8 459.6,420.5 460.0,417.9 461.1,415.7 462.2,413.4 463.7,410.6 466.0,408.5 467.8,405.9 470.4,404.1 470.0,401.3 468.9,398.6 468.0,395.9 470.1,393.9 472.7,392.6 475.4,391.5 477.0,388.8 479.7,387.7 482.7,387.6 485.5,386.4 488.5,386.0 491.4,385.4 494.2,386.2 497.0,385.7 499.8,386.1 502.6,386.7 505.4,386.6 507.9,389.0 511.2,390.1 513.0,388.3 515.5,387.4 517.1,385.4 518.3,382.7 519.1,379.9 519.7,377.0 520.5,374.1 521.7,371.4 520.4,368.0 520.6,364.4 523.0,362.3 525.7,360.7 528.7,359.7 531.2,358.9 533.2,357.0 535.5,355.7 538.1,355.0 540.1,352.9 543.1,352.4 545.4,350.8 547.6,349.0 549.6,347.0 552.1,345.7 554.0,344.0 556.1,342.6 558.4,341.4 560.2,339.6 562.6,338.7" fill="#a2dc9c" stroke="#6b8a68" stroke-width="1.3" stroke-linejoin="round"/><polyline points="566.1,462.5 589.5,455.5 608.1,450.8 619.8,452.0 626.8,460.1" fill="none" stroke="#7a9a78" stroke-width="0.9"/><polyline points="519.4,499.8 538.1,483.5 549.8,474.1 556.8,464.8" fill="none" stroke="#7a9a78" stroke-width="0.9"/><polyline points="478.0,584.0 481.0,579.0 491.0,571.0 493.7,561.0 491.0,551.0 486.0,545.0 476.0,540.0 463.0,538.0" fill="none" stroke="#7a9a78" stroke-width="0.9"/><polyline points="540.7,540.7 542.1,565.5 543.5,579.3 553.1,575.2 562.8,579.3 568.3,583.5 584.9,573.8 601.4,566.9" fill="none" stroke="#7a9a78" stroke-width="0.9"/><polyline points="470.0,555.0 480.0,540.0 497.0,530.0" fill="none" stroke="#7a9a78" stroke-width="0.9"/><polyline points="575.4,320.0 577.6,316.5 580.0,313.0 582.3,310.8 585.0,308.8 586.8,306.1 589.2,303.9 591.5,301.7 593.4,299.0 596.0,297.0 598.5,295.3 601.1,293.6 603.7,292.1 606.0,290.0 609.3,289.4 612.7,289.7 616.0,290.0 617.0,286.5 619.4,283.7 620.7,280.4 622.0,277.0 624.5,274.8 627.9,274.4 630.7,272.8 633.3,270.8 636.0,269.0 639.1,267.1 641.7,264.6 645.0,263.0 641.2,258.7 639.5,255.8 639.0,252.4 638.3,249.5 636.9,246.7 636.3,243.7 636.0,240.7 633.6,238.1 631.2,235.4 629.6,232.2 628.0,229.6 626.3,226.9 625.2,224.0 623.2,221.6 625.9,220.0 628.5,218.4 632.2,218.6 636.0,218.4 637.4,215.2 639.0,212.1 640.2,208.8 641.9,205.9 643.5,203.0 645.5,200.3 649.1,198.2 651.8,195.0 654.7,192.8 656.6,189.7 657.4,186.0 657.2,182.3 661.1,180.1 664.6,177.5 666.9,180.0 669.2,182.6 671.0,185.5 669.9,188.1 666.3,189.7 662.5,190.8 657.2,188.7 662.5,190.8 666.0,188.9 669.9,188.1 671.0,189.7 672.8,192.4 675.3,194.5 677.0,197.3 679.6,199.3 681.1,202.3 683.3,204.6 685.8,206.7 688.1,210.6 689.0,215.0 691.4,216.9 692.9,219.8 695.4,221.6 699.0,217.3 700.9,220.5 702.8,223.7 701.7,229.0 705.0,224.8 710.2,226.3 712.2,228.8 715.1,230.2 717.8,231.8 719.8,234.3 720.7,238.1 722.0,241.7 722.6,245.3 724.3,248.5 725.6,251.9 726.0,255.5 726.5,258.5 725.9,261.7 726.4,264.7 727.5,267.7 727.6,270.8 728.1,273.8 728.4,276.9 728.0,280.0 728.2,283.5 729.6,286.7 729.7,290.2 730.5,293.6 731.0,297.0 731.8,300.0 731.3,303.0 732.5,305.9 732.1,309.0 733.2,311.9 733.0,315.0 733.9,318.0 735.1,320.9 735.8,323.9 735.7,327.2 736.8,330.1 738.0,333.0 738.9,335.9 738.7,339.1 740.2,341.9 740.5,345.0 741.0,348.0 741.6,351.1 743.0,353.8 744.9,356.5 744.8,359.8 746.9,362.3 748.0,365.2 748.4,368.4 750.1,371.0 751.0,374.0 753.2,376.4 755.5,378.8 757.5,381.5 758.9,384.5 761.0,387.0 761.1,390.3 760.4,393.5 760.4,396.8 760.0,400.0 760.9,403.3 761.0,406.8 762.5,410.0 763.2,413.4 763.7,416.8 765.0,420.0 766.4,422.9 767.5,425.8 767.5,429.2 769.0,432.0 770.7,434.7 773.3,436.7 775.3,439.1 776.7,442.0 778.5,444.6 781.3,446.4 782.5,449.5 784.6,451.9 787.0,454.0 788.1,457.3 789.6,460.5 791.3,463.6 792.0,467.0 795.2,467.6 797.8,470.0 801.1,470.3 803.9,472.2 807.1,472.8 809.8,474.8 812.9,475.7 816.1,476.5 819.0,478.0 822.3,478.7 825.1,480.5 828.6,480.8 831.6,482.1 834.6,483.7 837.6,485.2 840.8,486.0 844.0,487.0 846.8,488.5 848.9,491.1 852.0,492.1 854.8,493.6 857.2,495.7 859.6,497.7 862.6,499.1 865.1,501.0 867.5,503.0 870.0,505.0 872.5,507.1 875.5,508.6 877.8,510.8 879.9,513.4 882.4,515.5 885.3,517.2 888.0,519.0 889.0,522.2 890.4,525.3 892.2,528.2 893.6,531.3 894.9,534.4 895.0,538.0 896.5,541.0 898.0,544.0 898.8,547.5 901.4,550.1 902.0,553.7 903.6,556.8 905.0,560.0" fill="none" stroke="#858585" stroke-width="1.1" stroke-linejoin="round"/><polyline points="572.0,334.0 574.3,329.3 574.6,326.2 575.3,323.1 575.4,320.0" fill="none" stroke="#858585" stroke-width="1.1" stroke-linejoin="round"/><polyline points="701.0,381.0 704.2,382.2 706.9,384.2 709.9,385.7 713.0,387.0 716.4,387.0 719.6,385.6 722.9,385.1 726.3,384.5 729.6,384.1 733.0,384.0 736.3,383.1 739.2,381.1 742.6,380.4 745.7,378.8 749.0,378.0 753.0,376.0" fill="none" stroke="#858585" stroke-width="1.1" stroke-linejoin="round"/><polyline points="792.0,467.0 789.9,469.9 787.0,472.0 784.6,473.8 782.4,475.8 779.8,477.5 778.0,480.0 776.2,482.5 774.3,484.9 772.0,487.0 769.3,489.3 766.8,491.8 764.7,494.7 762.0,497.0 759.2,499.5 756.8,502.4 754.0,505.0" fill="none" stroke="#858585" stroke-width="1.5" stroke-linejoin="round"/><polyline points="801.0,649.0 799.4,652.3 799.0,656.0 801.1,658.7 801.7,662.1 803.9,664.8 804.4,668.3 807.1,670.7 808.0,674.0 809.8,676.5 812.1,678.5 814.1,680.8 816.1,683.1 819.0,684.5 821.0,686.7 823.0,689.0 826.4,690.0 830.1,690.2 833.6,690.9 837.0,692.0 840.2,693.2 842.8,695.4 845.8,697.0 849.0,698.0 852.4,697.7 855.6,696.3 859.0,696.0 862.1,694.8 864.5,692.5 867.0,690.4 870.0,689.0 873.5,689.4 877.0,689.9 880.6,689.9 884.0,691.0 887.0,691.2 890.0,691.1 893.0,691.5 896.0,692.2 899.0,691.9 902.0,691.7 905.0,692.0" fill="none" stroke="#858585" stroke-width="1.5" stroke-linejoin="round"/><polyline points="787.0,660.0 790.0,660.3 793.0,661.0 796.0,661.4 799.0,662.0" fill="none" stroke="#858585" stroke-width="1.1" stroke-linejoin="round"/><polyline points="799.0,692.0 802.2,693.3 805.3,694.9 808.5,696.4 812.0,697.0 814.6,694.8 817.7,693.3 820.4,691.2 823.0,689.0" fill="none" stroke="#858585" stroke-width="1.1" stroke-linejoin="round"/><polyline points="859.0,696.0 858.9,699.6 857.8,703.0 857.7,706.5 857.0,710.0 857.4,713.0 857.0,716.0 857.0,719.0" fill="none" stroke="#858585" stroke-width="1.1" stroke-linejoin="round"/><polyline points="862.0,694.0 865.2,694.8 868.3,695.6 871.6,695.8 874.8,696.4 878.0,697.0 881.0,697.2 883.9,698.4 887.0,697.7 890.1,697.8 893.0,698.3 896.0,698.7 899.0,699.1 902.0,699.3 905.0,700.0" fill="none" stroke="#858585" stroke-width="1.1" stroke-linejoin="round"/><path d="M690 208.8 L695 208.5 C699 208 700 212 697.5 213 C695 213.5 694 211 695 209" fill="none" stroke="#858585" stroke-width="1.1"/><polyline points="492.5,455.5 497.2,467.1" fill="none" stroke="#2a6b96" stroke-width="2.6" stroke-linecap="round"/><polyline points="533.4,488.1 538.1,483.5 549.8,473.0" fill="none" stroke="#2a6b96" stroke-width="2.6" stroke-linecap="round"/><polyline points="552.1,499.8 556.8,491.6" fill="none" stroke="#2a6b96" stroke-width="2.6" stroke-linecap="round"/><polyline points="532.4,533.8 531.8,553.1" fill="none" stroke="#2a6b96" stroke-width="2.6" stroke-linecap="round"/><polyline points="444.7,483.5 451.7,469.5 470.4,460.1 479.7,462.5 491.4,471.8 503.1,474.1 514.7,471.8 528.7,467.1 561.4,460.1" fill="none" stroke="#b5503a" stroke-width="2.3" stroke-linejoin="round"/><polyline points="442.3,464.8 454.0,462.5 470.4,460.1" fill="none" stroke="#b5503a" stroke-width="2.3" stroke-linejoin="round"/><polyline points="561.4,460.1 580.1,462.5 598.8,478.8 623.3,495.2" fill="none" stroke="#b5503a" stroke-width="2.3" stroke-linejoin="round"/><polyline points="561.4,460.1 567.3,469.5 573.1,488.1 574.3,506.8 569.6,523.2 564.2,535.0 561.4,543.5" fill="none" stroke="#b5503a" stroke-width="2.3" stroke-linejoin="round"/><polyline points="495.2,575.2 503.5,579.3 511.1,574.5 515.9,565.5 520.0,560.0 531.1,556.6 544.9,550.4 561.4,543.5" fill="none" stroke="#b5503a" stroke-width="2.3" stroke-linejoin="round"/><polyline points="531.1,556.6 540.7,568.3 544.9,566.9 554.5,558.6 559.4,558.6" fill="none" stroke="#b5503a" stroke-width="2.3" stroke-linejoin="round"/><polyline points="561.4,543.5 559.4,558.6 560.0,565.5 564.2,575.2 565.6,584.9 556.6,597.3 553.8,608.3" fill="none" stroke="#b5503a" stroke-width="2.3" stroke-linejoin="round"/><polyline points="561.4,543.5 566.9,551.7 568.3,561.4 565.6,575.2" fill="none" stroke="#b5503a" stroke-width="2.3" stroke-linejoin="round"/><polyline points="538.0,529.0 550.4,529.7 557.3,539.3" fill="none" stroke="#b5503a" stroke-width="2.3" stroke-linejoin="round"/><polyline points="539.3,535.2 557.3,538.0" fill="none" stroke="#b5503a" stroke-width="2.3" stroke-linejoin="round"/><polyline points="498.0,481.0 504.0,495.0 512.0,505.0" fill="none" stroke="#b5503a" stroke-width="2.3" stroke-linejoin="round"/><circle cx="442.5" cy="488" r="5.7" fill="#000"/><circle cx="523" cy="507.8" r="5.7" fill="#000"/><circle cx="531.3" cy="516.8" r="5.7" fill="#000"/><circle cx="536.3" cy="537.9" r="5.7" fill="#000"/><circle cx="261" cy="459" r="5.3" fill="#e8764f" stroke="#3a2116" stroke-width="1.5"/><circle cx="305" cy="559" r="5.3" fill="#e8764f" stroke="#3a2116" stroke-width="1.5"/><circle cx="471.9" cy="479.5" r="5.3" fill="#e8764f" stroke="#3a2116" stroke-width="1.5"/><circle cx="476.1" cy="476.7" r="5.3" fill="#e8764f" stroke="#3a2116" stroke-width="1.5"/><circle cx="483" cy="482.3" r="5.3" fill="#e8764f" stroke="#3a2116" stroke-width="1.5"/><circle cx="487.8" cy="489.2" r="5.3" fill="#e8764f" stroke="#3a2116" stroke-width="1.5"/><circle cx="480.9" cy="493.3" r="5.3" fill="#e8764f" stroke="#3a2116" stroke-width="1.5"/><circle cx="470.5" cy="490.5" r="5.3" fill="#e8764f" stroke="#3a2116" stroke-width="1.5"/><circle cx="476.1" cy="490.5" r="5.3" fill="#e8764f" stroke="#3a2116" stroke-width="1.5"/><circle cx="498.1" cy="481.6" r="5.3" fill="#e8764f" stroke="#3a2116" stroke-width="1.5"/><circle cx="502.3" cy="493.3" r="5.3" fill="#e8764f" stroke="#3a2116" stroke-width="1.5"/><circle cx="483" cy="503" r="5.3" fill="#e8764f" stroke="#3a2116" stroke-width="1.5"/><circle cx="489.9" cy="503" r="5.3" fill="#e8764f" stroke="#3a2116" stroke-width="1.5"/><circle cx="496.8" cy="504.3" r="5.3" fill="#e8764f" stroke="#3a2116" stroke-width="1.5"/><circle cx="485.7" cy="509.9" r="5.3" fill="#e8764f" stroke="#3a2116" stroke-width="1.5"/><circle cx="491.2" cy="515.4" r="5.3" fill="#e8764f" stroke="#3a2116" stroke-width="1.5"/><circle cx="499.5" cy="514" r="5.3" fill="#e8764f" stroke="#3a2116" stroke-width="1.5"/><circle cx="507.8" cy="511.2" r="5.3" fill="#e8764f" stroke="#3a2116" stroke-width="1.5"/><circle cx="477.4" cy="522.3" r="5.3" fill="#e8764f" stroke="#3a2116" stroke-width="1.5"/><circle cx="487.1" cy="522.3" r="5.3" fill="#e8764f" stroke="#3a2116" stroke-width="1.5"/><circle cx="498.1" cy="522.3" r="5.3" fill="#e8764f" stroke="#3a2116" stroke-width="1.5"/><circle cx="507.8" cy="526.4" r="5.3" fill="#e8764f" stroke="#3a2116" stroke-width="1.5"/><circle cx="489.9" cy="530.6" r="5.3" fill="#e8764f" stroke="#3a2116" stroke-width="1.5"/><circle cx="496.8" cy="533.3" r="5.3" fill="#e8764f" stroke="#3a2116" stroke-width="1.5"/><circle cx="502.3" cy="536.1" r="5.3" fill="#e8764f" stroke="#3a2116" stroke-width="1.5"/><circle cx="507.8" cy="541.6" r="5.3" fill="#e8764f" stroke="#3a2116" stroke-width="1.5"/><circle cx="516.1" cy="540.2" r="5.3" fill="#e8764f" stroke="#3a2116" stroke-width="1.5"/><circle cx="489.9" cy="540.2" r="5.3" fill="#e8764f" stroke="#3a2116" stroke-width="1.5"/><circle cx="494" cy="544.4" r="5.3" fill="#e8764f" stroke="#3a2116" stroke-width="1.5"/><circle cx="456.7" cy="511.2" r="5.3" fill="#e8764f" stroke="#3a2116" stroke-width="1.5"/><circle cx="474.7" cy="509.9" r="5.3" fill="#e8764f" stroke="#3a2116" stroke-width="1.5"/><circle cx="521.6" cy="522.3" r="5.3" fill="#e8764f" stroke="#3a2116" stroke-width="1.5"/><circle cx="524.4" cy="527.8" r="5.3" fill="#e8764f" stroke="#3a2116" stroke-width="1.5"/><circle cx="520.2" cy="536.1" r="5.3" fill="#e8764f" stroke="#3a2116" stroke-width="1.5"/><circle cx="513.3" cy="476.7" r="5.3" fill="#e8764f" stroke="#3a2116" stroke-width="1.5"/><circle cx="465" cy="534.7" r="5.3" fill="#e8764f" stroke="#3a2116" stroke-width="1.5"/><circle cx="593" cy="521.3" r="5.3" fill="#e8764f" stroke="#3a2116" stroke-width="1.5"/><circle cx="547" cy="481.6" r="5.3" fill="#e8764f" stroke="#3a2116" stroke-width="1.5"/><circle cx="510.6" cy="552.4" r="5.3" fill="#e8764f" stroke="#3a2116" stroke-width="1.5"/><circle cx="445.7" cy="465.4" r="5.3" fill="#e8764f" stroke="#3a2116" stroke-width="1.5"/><circle cx="506.4" cy="461.3" r="5.3" fill="#e8764f" stroke="#3a2116" stroke-width="1.5"/><circle cx="519.9" cy="465.4" r="5.3" fill="#e8764f" stroke="#3a2116" stroke-width="1.5"/><circle cx="506.4" cy="474.7" r="5.3" fill="#e8764f" stroke="#3a2116" stroke-width="1.5"/><circle cx="514.7" cy="478.8" r="5.3" fill="#e8764f" stroke="#3a2116" stroke-width="1.5"/><circle cx="476.1" cy="478.1" r="5.3" fill="#e8764f" stroke="#3a2116" stroke-width="1.5"/><circle cx="487.8" cy="480.9" r="5.3" fill="#e8764f" stroke="#3a2116" stroke-width="1.5"/><circle cx="498.1" cy="481.6" r="5.3" fill="#e8764f" stroke="#3a2116" stroke-width="1.5"/><circle cx="480.9" cy="485.0" r="5.3" fill="#e8764f" stroke="#3a2116" stroke-width="1.5"/><circle cx="502.3" cy="489.2" r="5.3" fill="#e8764f" stroke="#3a2116" stroke-width="1.5"/><circle cx="487.8" cy="489.9" r="5.3" fill="#e8764f" stroke="#3a2116" stroke-width="1.5"/><circle cx="516.1" cy="489.9" r="5.3" fill="#e8764f" stroke="#3a2116" stroke-width="1.5"/><circle cx="523.7" cy="491.9" r="5.3" fill="#e8764f" stroke="#3a2116" stroke-width="1.5"/><circle cx="459.5" cy="491.9" r="5.3" fill="#e8764f" stroke="#3a2116" stroke-width="1.5"/><circle cx="469.9" cy="495.4" r="5.3" fill="#e8764f" stroke="#3a2116" stroke-width="1.5"/><circle cx="435.4" cy="496.1" r="5.3" fill="#e8764f" stroke="#3a2116" stroke-width="1.5"/><circle cx="441.6" cy="501.6" r="5.3" fill="#e8764f" stroke="#3a2116" stroke-width="1.5"/><circle cx="451.2" cy="503.0" r="5.3" fill="#e8764f" stroke="#3a2116" stroke-width="1.5"/><circle cx="452.6" cy="498.1" r="5.3" fill="#e8764f" stroke="#3a2116" stroke-width="1.5"/><circle cx="480.2" cy="503.0" r="5.3" fill="#e8764f" stroke="#3a2116" stroke-width="1.5"/><circle cx="496.8" cy="501.6" r="5.3" fill="#e8764f" stroke="#3a2116" stroke-width="1.5"/><circle cx="491.2" cy="498.1" r="5.3" fill="#e8764f" stroke="#3a2116" stroke-width="1.5"/><circle cx="500.2" cy="505.7" r="5.3" fill="#e8764f" stroke="#3a2116" stroke-width="1.5"/><circle cx="500.2" cy="508.5" r="5.3" fill="#e8764f" stroke="#3a2116" stroke-width="1.5"/><circle cx="466.4" cy="509.9" r="5.3" fill="#e8764f" stroke="#3a2116" stroke-width="1.5"/><circle cx="474.7" cy="507.1" r="5.3" fill="#e8764f" stroke="#3a2116" stroke-width="1.5"/><circle cx="489.9" cy="509.9" r="5.3" fill="#e8764f" stroke="#3a2116" stroke-width="1.5"/><circle cx="458.1" cy="512.6" r="5.3" fill="#e8764f" stroke="#3a2116" stroke-width="1.5"/><circle cx="456.1" cy="514.0" r="5.3" fill="#e8764f" stroke="#3a2116" stroke-width="1.5"/><circle cx="483.7" cy="514.7" r="5.3" fill="#e8764f" stroke="#3a2116" stroke-width="1.5"/><circle cx="509.2" cy="516.1" r="5.3" fill="#e8764f" stroke="#3a2116" stroke-width="1.5"/><circle cx="520.9" cy="511.9" r="5.3" fill="#e8764f" stroke="#3a2116" stroke-width="1.5"/><circle cx="461.6" cy="518.8" r="5.3" fill="#e8764f" stroke="#3a2116" stroke-width="1.5"/><circle cx="470.5" cy="521.6" r="5.3" fill="#e8764f" stroke="#3a2116" stroke-width="1.5"/><circle cx="479.5" cy="520.9" r="5.3" fill="#e8764f" stroke="#3a2116" stroke-width="1.5"/><circle cx="492.6" cy="520.2" r="5.3" fill="#e8764f" stroke="#3a2116" stroke-width="1.5"/><circle cx="503.7" cy="523.7" r="5.3" fill="#e8764f" stroke="#3a2116" stroke-width="1.5"/><circle cx="527.8" cy="518.8" r="5.3" fill="#e8764f" stroke="#3a2116" stroke-width="1.5"/><circle cx="483.0" cy="525.0" r="5.3" fill="#e8764f" stroke="#3a2116" stroke-width="1.5"/><circle cx="495.4" cy="527.1" r="5.3" fill="#e8764f" stroke="#3a2116" stroke-width="1.5"/><circle cx="473.3" cy="527.8" r="5.3" fill="#e8764f" stroke="#3a2116" stroke-width="1.5"/><circle cx="488.5" cy="530.6" r="5.3" fill="#e8764f" stroke="#3a2116" stroke-width="1.5"/><circle cx="465.0" cy="534.7" r="5.3" fill="#e8764f" stroke="#3a2116" stroke-width="1.5"/><circle cx="470.5" cy="534.0" r="5.3" fill="#e8764f" stroke="#3a2116" stroke-width="1.5"/><circle cx="481.6" cy="534.0" r="5.3" fill="#e8764f" stroke="#3a2116" stroke-width="1.5"/><circle cx="502.3" cy="532.6" r="5.3" fill="#e8764f" stroke="#3a2116" stroke-width="1.5"/><circle cx="527.8" cy="534.0" r="5.3" fill="#e8764f" stroke="#3a2116" stroke-width="1.5"/><circle cx="533.3" cy="525.7" r="5.3" fill="#e8764f" stroke="#3a2116" stroke-width="1.5"/><circle cx="485.7" cy="538.8" r="5.3" fill="#e8764f" stroke="#3a2116" stroke-width="1.5"/><circle cx="506.4" cy="540.2" r="5.3" fill="#e8764f" stroke="#3a2116" stroke-width="1.5"/><circle cx="510.6" cy="540.2" r="5.3" fill="#e8764f" stroke="#3a2116" stroke-width="1.5"/><circle cx="496.1" cy="543.7" r="5.3" fill="#e8764f" stroke="#3a2116" stroke-width="1.5"/><circle cx="476.8" cy="544.4" r="5.3" fill="#e8764f" stroke="#3a2116" stroke-width="1.5"/><circle cx="497.5" cy="548.5" r="5.3" fill="#e8764f" stroke="#3a2116" stroke-width="1.5"/><circle cx="479.5" cy="549.2" r="5.3" fill="#e8764f" stroke="#3a2116" stroke-width="1.5"/><circle cx="477.4" cy="556.8" r="5.3" fill="#e8764f" stroke="#3a2116" stroke-width="1.5"/><circle cx="514.7" cy="525.9" r="5.2" fill="#f2f030" stroke="#3a2116" stroke-width="1.4"/><circle cx="514.7" cy="533.2" r="5.3" fill="#e8764f" stroke="#3a2116" stroke-width="1.5"/><circle cx="504" cy="418.6" r="5.7" fill="#000"/><circle cx="534.6" cy="402.2" r="5.7" fill="#000"/><circle cx="561.4" cy="459" r="5.7" fill="#000"/><circle cx="623.3" cy="495.2" r="5.7" fill="#000"/><circle cx="561.7" cy="543.5" r="5.7" fill="#000"/><circle cx="510.6" cy="574.2" r="5.7" fill="#000"/><circle cx="493.1" cy="592.7" r="5.7" fill="#000"/><circle cx="553.8" cy="611.8" r="5.7" fill="#000"/></svg>
<div class="abs" style="left:0;top:906px;width:2102px;height:36px;background:#f0f0f0;border-top:1px solid #c9c9c9"></div>
<div class="abs" style="left:0;top:912px;width:267px;height:29px;background:#fff;border:1px solid #bdbdbd;border-radius:2px"></div>
<svg style="left:9px;top:917px" width="20" height="20"><circle cx="8" cy="8" r="5.5" fill="none" stroke="#666" stroke-width="1.6"/><path d="M12 12 L17 17" stroke="#666" stroke-width="2"/></svg>
<div class="t" style="left:37px;top:919px;font-size:15px;color:#7a7a7a">Type to locate (Ctrl+K)</div>
<div class="t" style="left:279px;top:919px;font-size:14.7px;color:#111">1 feature(s) selected on layer Cole_other.</div>
<div class="t" style="left:991px;top:919px;font-size:14.5px;color:#111">Coordinate</div>
<div class="abs" style="left:1068px;top:911px;width:121px;height:30px;background:#fff;border:1px solid #c2c2c2;border-radius:2px"></div>
<div class="t" style="left:1076px;top:919px;font-size:14.5px;color:#111">607639,332586</div>
<svg style="left:1196px;top:914px" width="24" height="24"><circle cx="11" cy="12" r="7" fill="none" stroke="#555" stroke-width="1.6"/><path d="M5 4 L18 18 M11 3 L11 21 M3 12 L19 12" stroke="#444" stroke-width="1.4"/><path d="M8 8 L15 15" stroke="#333" stroke-width="2.5"/></svg>
<div class="t" style="left:1234px;top:919px;font-size:14.5px;color:#111">Scale</div>
<div class="abs" style="left:1273px;top:911px;width:108px;height:30px;background:#fff;border:1px solid #c2c2c2;border-radius:2px"></div>
<div class="abs" style="left:1354px;top:912px;width:1px;height:28px;background:#d0d0d0"></div>
<svg style="left:1361px;top:923px" width="12" height="8"><path d="M0.5 1 L10.5 1 L5.5 6 Z" fill="#555"/></svg>
<div class="t" style="left:1278px;top:919px;font-size:14.5px;color:#111">1:2289487</div>
<svg style="left:1396px;top:914px" width="20" height="26"><path d="M5 11 L5 7 A5 5 0 0 1 15 7 L15 11" fill="none" stroke="#666" stroke-width="2.4"/><rect x="2" y="11" width="16" height="13" rx="2" fill="#666"/></svg>
<div class="t" style="left:1424px;top:919px;font-size:14.5px;color:#111">Magnifier</div>
<div class="abs" style="left:1490px;top:911px;width:116px;height:30px;background:#fff;border:1px solid #c2c2c2;border-radius:2px"></div>
<div class="t" style="left:1496px;top:919px;font-size:14.5px;color:#111">100%</div>
<svg style="left:1589px;top:914px" width="14" height="24"><path d="M2 9 L7 3.5 L12 9 Z M2 15 L7 20.5 L12 15 Z" fill="#555"/></svg>
<div class="t" style="left:1618px;top:919px;font-size:14.5px;color:#111">Rotation</div>
<div class="abs" style="left:1686px;top:911px;width:112px;height:30px;background:#fff;border:1px solid #c2c2c2;border-radius:2px"></div>
<div class="t" style="left:1692px;top:919px;font-size:14.5px;color:#111">0.0 &#176;</div>
<svg style="left:1781px;top:914px" width="14" height="24"><path d="M2 9 L7 3.5 L12 9 Z M2 15 L7 20.5 L12 15 Z" fill="#555"/></svg>
<svg style="left:1807px;top:916px" width="19" height="19"><rect x="0.5" y="0.5" width="17" height="17" fill="#fff" stroke="#b5b5b5"/><path d="M4 9 L7.5 14 L13.5 3" fill="none" stroke="#000" stroke-width="2"/></svg>
<div class="t" style="left:1832px;top:919px;font-size:14.5px;color:#111">Render</div>
<svg style="left:1902px;top:916px" width="22" height="20"><circle cx="11" cy="10" r="8" fill="none" stroke="#777" stroke-width="1.3"/><ellipse cx="11" cy="10" rx="3.5" ry="8" fill="none" stroke="#777" stroke-width="1.1"/><path d="M3 10 L19 10 M5 5.5 L17 5.5 M5 14.5 L17 14.5" stroke="#777" stroke-width="1.1"/></svg>
<div class="t" style="left:1926px;top:919px;font-size:14.5px;color:#111">EPSG:27700</div>
<svg style="left:2033px;top:914px" width="24" height="24"><path d="M11.5 2 C17.5 2 21.5 5.5 21.5 10 C21.5 13 19.5 15.5 17 16.5 L22 20.5 C19 20.5 16 19 14.5 17.8 C13.5 18 12.5 18 11.5 18 C5.5 18 1.5 14.5 1.5 10 C1.5 5.5 5.5 2 11.5 2 Z" fill="#555"/><circle cx="7" cy="10" r="1.8" fill="#fff"/><circle cx="12" cy="10" r="1.8" fill="#fff"/><circle cx="17" cy="10" r="1.8" fill="#fff"/></svg>
<svg style="left:2080px;top:926px" width="16" height="16"><circle cx="13" cy="3" r="0.9" fill="#b5b5b5"/><circle cx="13" cy="7" r="0.9" fill="#b5b5b5"/><circle cx="9" cy="7" r="0.9" fill="#b5b5b5"/><circle cx="13" cy="11" r="0.9" fill="#b5b5b5"/><circle cx="9" cy="11" r="0.9" fill="#b5b5b5"/><circle cx="5" cy="11" r="0.9" fill="#b5b5b5"/><circle cx="13" cy="15" r="0.9" fill="#b5b5b5"/><circle cx="9" cy="15" r="0.9" fill="#b5b5b5"/><circle cx="5" cy="15" r="0.9" fill="#b5b5b5"/><circle cx="1" cy="15" r="0.9" fill="#b5b5b5"/></svg>
<div class="abs" style="left:0;top:908px;width:2096px;height:1px;background:#fafafa"></div>
<div class="abs" style="left:899px;top:146px;width:1131px;height:699px;background:#f0f0f0;border:1px solid #9a9a9a;box-shadow:2px 3px 12px rgba(0,0,0,0.28)"></div>
<div class="abs" style="left:900px;top:147px;width:1129px;height:40px;background:#fff"></div>
<div class="t" style="left:943px;top:158px;font-size:15px;color:#7a7a7a">Cole_other :: Features Total: 237, Filtered: 237, Selected: 1</div>
<div class="abs" style="left:900px;top:228px;width:1128px;height:581px;background:#fff;border:1px solid #b4b4b4"></div>
<div class="abs" style="left:901px;top:229px;width:1108px;height:24.69999999999999px;background:linear-gradient(#fdfdfd,#f1f1f1);border-bottom:1px solid #b9b9b9"></div>
<div class="t" style="left:934.1px;width:134.2px;text-align:center;top:235px;font-size:15px;color:#111">pl_name</div>
<div class="abs" style="left:1068.3px;top:229px;width:1px;height:24.69999999999999px;background:#d5d5d5"></div>
<div class="t" style="left:1068.3px;width:134.2px;text-align:center;top:235px;font-size:15px;color:#111">visited</div>
<div class="abs" style="left:1202.5px;top:229px;width:1px;height:24.69999999999999px;background:#d5d5d5"></div>
<div class="t" style="left:1202.5px;width:134.2px;text-align:center;top:235px;font-size:15px;color:#111">date</div>
<div class="abs" style="left:1336.7px;top:229px;width:1px;height:24.69999999999999px;background:#d5d5d5"></div>
<div class="t" style="left:1336.7px;width:134.2px;text-align:center;top:235px;font-size:15px;color:#111">cal_date</div>
<div class="abs" style="left:1470.9px;top:229px;width:1px;height:24.69999999999999px;background:#d5d5d5"></div>
<div class="t" style="left:1470.9px;width:134.2px;text-align:center;top:235px;font-size:15px;color:#111">St_Name</div>
<div class="abs" style="left:1605.1px;top:229px;width:1px;height:24.69999999999999px;background:#d5d5d5"></div>
<div class="t" style="left:1605.1px;width:134.2px;text-align:center;top:235px;font-size:15px;color:#111">Feature_ty</div>
<div class="abs" style="left:1739.3px;top:229px;width:1px;height:24.69999999999999px;background:#d5d5d5"></div>
<div class="t" style="left:1739.3px;width:134.2px;text-align:center;top:235px;font-size:15px;color:#111">Longitude</div>
<div class="abs" style="left:1873.5px;top:229px;width:1px;height:24.69999999999999px;background:#d5d5d5"></div>
<div class="t" style="left:1873.5px;width:134.2px;text-align:center;top:235px;font-size:15px;color:#111">Latitude</div>
<div class="abs" style="left:901px;top:253.7px;width:33.1px;height:40.3px;background:linear-gradient(90deg,#f0f0f0,#fbfbfb 50%,#f0f0f0);border-bottom:1px solid #b2b2b2"></div>
<div class="abs" style="left:933.1px;top:253.7px;width:1px;height:40.3px;background:#a8a8a8"></div>
<div class="t" style="left:904px;top:267.5px;font-size:15px;color:#111">1</div>
<div class="abs" style="left:934.1px;top:253.7px;width:1073.6px;height:40.3px;background:#3999f6;border-bottom:1px solid #d0d0d0"></div>
<div class="abs" style="left:934.1px;top:253.7px;width:1px;height:40.3px;background:#d8e8fa"></div>
<div class="t" style="left:939.1px;top:267.5px;font-size:15px;color:#fff">Yewdale Crag</div>
<div class="abs" style="left:1068.3px;top:253.7px;width:1px;height:40.3px;background:#d8e8fa"></div>
<div class="t" style="left:1073.3px;top:267.5px;font-size:15px;color:#fff">N</div>
<div class="abs" style="left:1202.5px;top:253.7px;width:1px;height:40.3px;background:#d8e8fa"></div>
<div class="t" style="left:1207.5px;top:267.5px;font-size:15px;color:#fff">Sunday Augt. 8th</div>
<div class="abs" style="left:1336.7px;top:253.7px;width:1px;height:40.3px;background:#d8e8fa"></div>
<div class="t" style="left:1341.7px;top:267.5px;font-size:15px;color:#fff">8/8/1802</div>
<div class="abs" style="left:1470.9px;top:253.7px;width:1px;height:40.3px;background:#d8e8fa"></div>
<div class="t" style="left:1475.9px;top:267.5px;font-size:15px;color:#fff">Yewdale Fells</div>
<div class="abs" style="left:1605.1px;top:253.7px;width:1px;height:40.3px;background:#d8e8fa"></div>
<div class="abs" style="left:1739.3px;top:253.7px;width:1px;height:40.3px;background:#d8e8fa"></div>
<div class="t" style="left:1739.3px;width:129.2px;text-align:right;top:267.5px;font-size:15px;color:#fff">-3.071714366</div>
<div class="abs" style="left:1873.5px;top:253.7px;width:1px;height:40.3px;background:#d8e8fa"></div>
<div class="t" style="left:1873.5px;width:129.2px;text-align:right;top:267.5px;font-size:15px;color:#fff">54.38623582</div>
<div class="abs" style="left:901px;top:294.0px;width:33.1px;height:40.3px;background:linear-gradient(90deg,#f0f0f0,#fbfbfb 50%,#f0f0f0);border-bottom:1px solid #b2b2b2"></div>
<div class="abs" style="left:933.1px;top:294.0px;width:1px;height:40.3px;background:#a8a8a8"></div>
<div class="t" style="left:904px;top:307.8px;font-size:15px;color:#111">2</div>
<div class="abs" style="left:934.1px;top:294.0px;width:1073.6px;height:40.3px;background:#e9e7e4;border-bottom:1px solid #d0d0d0"></div>
<div class="abs" style="left:934.1px;top:294.0px;width:1px;height:40.3px;background:#d0d0d0"></div>
<div class="t" style="left:939.1px;top:307.8px;font-size:15px;color:#111">Torva</div>
<div class="abs" style="left:1068.3px;top:294.0px;width:1px;height:40.3px;background:#d0d0d0"></div>
<div class="t" style="left:1073.3px;top:307.8px;font-size:15px;color:#111">U</div>
<div class="abs" style="left:1202.5px;top:294.0px;width:1px;height:40.3px;background:#d0d0d0"></div>
<div class="t" style="left:1207.5px;top:307.8px;font-size:15px;color:#111">Sunday Augt. 8th</div>
<div class="abs" style="left:1336.7px;top:294.0px;width:1px;height:40.3px;background:#d0d0d0"></div>
<div class="t" style="left:1341.7px;top:307.8px;font-size:15px;color:#111">8/8/1802</div>
<div class="abs" style="left:1470.9px;top:294.0px;width:1px;height:40.3px;background:#d0d0d0"></div>
<div class="t" style="left:1475.9px;top:307.8px;font-size:15px;color:#111">Torver</div>
<div class="abs" style="left:1605.1px;top:294.0px;width:1px;height:40.3px;background:#d0d0d0"></div>
<div class="abs" style="left:1739.3px;top:294.0px;width:1px;height:40.3px;background:#d0d0d0"></div>
<div class="t" style="left:1739.3px;width:129.2px;text-align:right;top:307.8px;font-size:15px;color:#111">-3.101302832</div>
<div class="abs" style="left:1873.5px;top:294.0px;width:1px;height:40.3px;background:#d0d0d0"></div>
<div class="t" style="left:1873.5px;width:129.2px;text-align:right;top:307.8px;font-size:15px;color:#111">54.34103045</div>
<div class="abs" style="left:901px;top:334.3px;width:33.1px;height:40.3px;background:linear-gradient(90deg,#f0f0f0,#fbfbfb 50%,#f0f0f0);border-bottom:1px solid #b2b2b2"></div>
<div class="abs" style="left:933.1px;top:334.3px;width:1px;height:40.3px;background:#a8a8a8"></div>
<div class="t" style="left:904px;top:348.1px;font-size:15px;color:#111">3</div>
<div class="abs" style="left:934.1px;top:334.3px;width:1073.6px;height:40.3px;background:#ffffff;border-bottom:1px solid #d0d0d0"></div>
<div class="abs" style="left:934.1px;top:334.3px;width:1px;height:40.3px;background:#d0d0d0"></div>
<div class="t" style="left:939.1px;top:348.1px;font-size:15px;color:#111">Coniston Hall</div>
<div class="abs" style="left:1068.3px;top:334.3px;width:1px;height:40.3px;background:#d0d0d0"></div>
<div class="t" style="left:1073.3px;top:348.1px;font-size:15px;color:#111">U</div>
<div class="abs" style="left:1202.5px;top:334.3px;width:1px;height:40.3px;background:#d0d0d0"></div>
<div class="t" style="left:1207.5px;top:348.1px;font-size:15px;color:#111">Sunday Augt. 8th</div>
<div class="abs" style="left:1336.7px;top:334.3px;width:1px;height:40.3px;background:#d0d0d0"></div>
<div class="t" style="left:1341.7px;top:348.1px;font-size:15px;color:#111">8/8/1802</div>
<div class="abs" style="left:1470.9px;top:334.3px;width:1px;height:40.3px;background:#d0d0d0"></div>
<div class="t" style="left:1475.9px;top:348.1px;font-size:15px;color:#111">Coniston Hall</div>
<div class="abs" style="left:1605.1px;top:334.3px;width:1px;height:40.3px;background:#d0d0d0"></div>
<div class="abs" style="left:1739.3px;top:334.3px;width:1px;height:40.3px;background:#d0d0d0"></div>
<div class="t" style="left:1739.3px;width:129.2px;text-align:right;top:348.1px;font-size:15px;color:#111">-3.071012525</div>
<div class="abs" style="left:1873.5px;top:334.3px;width:1px;height:40.3px;background:#d0d0d0"></div>
<div class="t" style="left:1873.5px;width:129.2px;text-align:right;top:348.1px;font-size:15px;color:#111">54.35927871</div>
<div class="abs" style="left:901px;top:374.6px;width:33.1px;height:40.3px;background:linear-gradient(90deg,#f0f0f0,#fbfbfb 50%,#f0f0f0);border-bottom:1px solid #b2b2b2"></div>
<div class="abs" style="left:933.1px;top:374.6px;width:1px;height:40.3px;background:#a8a8a8"></div>
<div class="t" style="left:904px;top:388.4px;font-size:15px;color:#111">4</div>
<div class="abs" style="left:934.1px;top:374.6px;width:1073.6px;height:40.3px;background:#e9e7e4;border-bottom:1px solid #d0d0d0"></div>
<div class="abs" style="left:934.1px;top:374.6px;width:1px;height:40.3px;background:#d0d0d0"></div>
<div class="t" style="left:939.1px;top:388.4px;font-size:15px;color:#111">Scrow</div>
<div class="abs" style="left:1068.3px;top:374.6px;width:1px;height:40.3px;background:#d0d0d0"></div>
<div class="t" style="left:1073.3px;top:388.4px;font-size:15px;color:#111">N</div>
<div class="abs" style="left:1202.5px;top:374.6px;width:1px;height:40.3px;background:#d0d0d0"></div>
<div class="t" style="left:1207.5px;top:388.4px;font-size:15px;color:#111">Sunday Augt. 8th</div>
<div class="abs" style="left:1336.7px;top:374.6px;width:1px;height:40.3px;background:#d0d0d0"></div>
<div class="t" style="left:1341.7px;top:388.4px;font-size:15px;color:#111">8/8/1802</div>
<div class="abs" style="left:1470.9px;top:374.6px;width:1px;height:40.3px;background:#d0d0d0"></div>
<div class="t" style="left:1475.9px;top:388.4px;font-size:15px;color:#111">Foul Scrow</div>
<div class="abs" style="left:1605.1px;top:374.6px;width:1px;height:40.3px;background:#d0d0d0"></div>
<div class="abs" style="left:1739.3px;top:374.6px;width:1px;height:40.3px;background:#d0d0d0"></div>
<div class="t" style="left:1739.3px;width:129.2px;text-align:right;top:388.4px;font-size:15px;color:#111">-3.086635255</div>
<div class="abs" style="left:1873.5px;top:374.6px;width:1px;height:40.3px;background:#d0d0d0"></div>
<div class="t" style="left:1873.5px;width:129.2px;text-align:right;top:388.4px;font-size:15px;color:#111">54.36812688</div>
<div class="abs" style="left:901px;top:414.9px;width:33.1px;height:40.3px;background:linear-gradient(90deg,#f0f0f0,#fbfbfb 50%,#f0f0f0);border-bottom:1px solid #b2b2b2"></div>
<div class="abs" style="left:933.1px;top:414.9px;width:1px;height:40.3px;background:#a8a8a8"></div>
<div class="t" style="left:904px;top:428.7px;font-size:15px;color:#111">5</div>
<div class="abs" style="left:934.1px;top:414.9px;width:1073.6px;height:40.3px;background:#ffffff;border-bottom:1px solid #d0d0d0"></div>
<div class="abs" style="left:934.1px;top:414.9px;width:1px;height:40.3px;background:#d0d0d0"></div>
<div class="t" style="left:939.1px;top:428.7px;font-size:15px;color:#111">Bell</div>
<div class="abs" style="left:1068.3px;top:414.9px;width:1px;height:40.3px;background:#d0d0d0"></div>
<div class="t" style="left:1073.3px;top:428.7px;font-size:15px;color:#111">N</div>
<div class="abs" style="left:1202.5px;top:414.9px;width:1px;height:40.3px;background:#d0d0d0"></div>
<div class="t" style="left:1207.5px;top:428.7px;font-size:15px;color:#111">Sunday Augt. 8th</div>
<div class="abs" style="left:1336.7px;top:414.9px;width:1px;height:40.3px;background:#d0d0d0"></div>
<div class="t" style="left:1341.7px;top:428.7px;font-size:15px;color:#111">8/8/1802</div>
<div class="abs" style="left:1470.9px;top:414.9px;width:1px;height:40.3px;background:#d0d0d0"></div>
<div class="t" style="left:1475.9px;top:428.7px;font-size:15px;color:#111">The Bell</div>
<div class="abs" style="left:1605.1px;top:414.9px;width:1px;height:40.3px;background:#d0d0d0"></div>
<div class="abs" style="left:1739.3px;top:414.9px;width:1px;height:40.3px;background:#d0d0d0"></div>
<div class="t" style="left:1739.3px;width:129.2px;text-align:right;top:428.7px;font-size:15px;color:#111">-3.102024036</div>
<div class="abs" style="left:1873.5px;top:414.9px;width:1px;height:40.3px;background:#d0d0d0"></div>
<div class="t" style="left:1873.5px;width:129.2px;text-align:right;top:428.7px;font-size:15px;color:#111">54.36798737</div>
<div class="abs" style="left:901px;top:455.2px;width:33.1px;height:40.3px;background:linear-gradient(90deg,#f0f0f0,#fbfbfb 50%,#f0f0f0);border-bottom:1px solid #b2b2b2"></div>
<div class="abs" style="left:933.1px;top:455.2px;width:1px;height:40.3px;background:#a8a8a8"></div>
<div class="t" style="left:904px;top:469.0px;font-size:15px;color:#111">6</div>
<div class="abs" style="left:934.1px;top:455.2px;width:1073.6px;height:40.3px;background:#e9e7e4;border-bottom:1px solid #d0d0d0"></div>
<div class="abs" style="left:934.1px;top:455.2px;width:1px;height:40.3px;background:#d0d0d0"></div>
<div class="t" style="left:939.1px;top:469.0px;font-size:15px;color:#111">Yewdale Crag</div>
<div class="abs" style="left:1068.3px;top:455.2px;width:1px;height:40.3px;background:#d0d0d0"></div>
<div class="t" style="left:1073.3px;top:469.0px;font-size:15px;color:#111">N</div>
<div class="abs" style="left:1202.5px;top:455.2px;width:1px;height:40.3px;background:#d0d0d0"></div>
<div class="t" style="left:1207.5px;top:469.0px;font-size:15px;color:#111">Sunday Augt. 8th</div>
<div class="abs" style="left:1336.7px;top:455.2px;width:1px;height:40.3px;background:#d0d0d0"></div>
<div class="t" style="left:1341.7px;top:469.0px;font-size:15px;color:#111">8/8/1802</div>
<div class="abs" style="left:1470.9px;top:455.2px;width:1px;height:40.3px;background:#d0d0d0"></div>
<div class="t" style="left:1475.9px;top:469.0px;font-size:15px;color:#111">Yewdale Fells</div>
<div class="abs" style="left:1605.1px;top:455.2px;width:1px;height:40.3px;background:#d0d0d0"></div>
<div class="abs" style="left:1739.3px;top:455.2px;width:1px;height:40.3px;background:#d0d0d0"></div>
<div class="t" style="left:1739.3px;width:129.2px;text-align:right;top:469.0px;font-size:15px;color:#111">-3.071714366</div>
<div class="abs" style="left:1873.5px;top:455.2px;width:1px;height:40.3px;background:#d0d0d0"></div>
<div class="t" style="left:1873.5px;width:129.2px;text-align:right;top:469.0px;font-size:15px;color:#111">54.38623582</div>
<div class="abs" style="left:901px;top:495.5px;width:33.1px;height:40.3px;background:linear-gradient(90deg,#f0f0f0,#fbfbfb 50%,#f0f0f0);border-bottom:1px solid #b2b2b2"></div>
<div class="abs" style="left:933.1px;top:495.5px;width:1px;height:40.3px;background:#a8a8a8"></div>
<div class="t" style="left:904px;top:509.3px;font-size:15px;color:#111">7</div>
<div class="abs" style="left:934.1px;top:495.5px;width:1073.6px;height:40.3px;background:#ffffff;border-bottom:1px solid #d0d0d0"></div>
<div class="abs" style="left:934.1px;top:495.5px;width:1px;height:40.3px;background:#d0d0d0"></div>
<div class="t" style="left:939.1px;top:509.3px;font-size:15px;color:#111">Lever's water-fall</div>
<div class="abs" style="left:1068.3px;top:495.5px;width:1px;height:40.3px;background:#d0d0d0"></div>
<div class="t" style="left:1073.3px;top:509.3px;font-size:15px;color:#111">N</div>
<div class="abs" style="left:1202.5px;top:495.5px;width:1px;height:40.3px;background:#d0d0d0"></div>
<div class="t" style="left:1207.5px;top:509.3px;font-size:15px;color:#111">Sunday Augt. 8th</div>
<div class="abs" style="left:1336.7px;top:495.5px;width:1px;height:40.3px;background:#d0d0d0"></div>
<div class="t" style="left:1341.7px;top:509.3px;font-size:15px;color:#111">8/8/1802</div>
<div class="abs" style="left:1470.9px;top:495.5px;width:1px;height:40.3px;background:#d0d0d0"></div>
<div class="t" style="left:1475.9px;top:509.3px;font-size:15px;color:#111">Levers Waterfall</div>
<div class="abs" style="left:1605.1px;top:495.5px;width:1px;height:40.3px;background:#d0d0d0"></div>
<div class="abs" style="left:1739.3px;top:495.5px;width:1px;height:40.3px;background:#d0d0d0"></div>
<div class="t" style="left:1739.3px;width:129.2px;text-align:right;top:509.3px;font-size:15px;color:#111">-3.086872561</div>
<div class="abs" style="left:1873.5px;top:495.5px;width:1px;height:40.3px;background:#d0d0d0"></div>
<div class="t" style="left:1873.5px;width:129.2px;text-align:right;top:509.3px;font-size:15px;color:#111">54.37711254</div>
<div class="abs" style="left:901px;top:535.8px;width:33.1px;height:40.3px;background:linear-gradient(90deg,#f0f0f0,#fbfbfb 50%,#f0f0f0);border-bottom:1px solid #b2b2b2"></div>
<div class="abs" style="left:933.1px;top:535.8px;width:1px;height:40.3px;background:#a8a8a8"></div>
<div class="t" style="left:904px;top:549.6px;font-size:15px;color:#111">8</div>
<div class="abs" style="left:934.1px;top:535.8px;width:1073.6px;height:40.3px;background:#e9e7e4;border-bottom:1px solid #d0d0d0"></div>
<div class="abs" style="left:934.1px;top:535.8px;width:1px;height:40.3px;background:#d0d0d0"></div>
<div class="t" style="left:939.1px;top:549.6px;font-size:15px;color:#111">Ennerdale</div>
<div class="abs" style="left:1068.3px;top:535.8px;width:1px;height:40.3px;background:#d0d0d0"></div>
<div class="t" style="left:1073.3px;top:549.6px;font-size:15px;color:#111">N</div>
<div class="abs" style="left:1202.5px;top:535.8px;width:1px;height:40.3px;background:#d0d0d0"></div>
<div class="t" style="left:1207.5px;top:549.6px;font-size:15px;color:#111">Sunday Augt. 1st</div>
<div class="abs" style="left:1336.7px;top:535.8px;width:1px;height:40.3px;background:#d0d0d0"></div>
<div class="t" style="left:1341.7px;top:549.6px;font-size:15px;color:#111">1/8/1802</div>
<div class="abs" style="left:1470.9px;top:535.8px;width:1px;height:40.3px;background:#d0d0d0"></div>
<div class="t" style="left:1475.9px;top:549.6px;font-size:15px;color:#111">Ennerdale Water</div>
<div class="abs" style="left:1605.1px;top:535.8px;width:1px;height:40.3px;background:#d0d0d0"></div>
<div class="t" style="left:1610.1px;top:549.6px;font-size:15px;color:#111">Valley</div>
<div class="abs" style="left:1739.3px;top:535.8px;width:1px;height:40.3px;background:#d0d0d0"></div>
<div class="t" style="left:1739.3px;width:129.2px;text-align:right;top:549.6px;font-size:15px;color:#111">-3.384139169</div>
<div class="abs" style="left:1873.5px;top:535.8px;width:1px;height:40.3px;background:#d0d0d0"></div>
<div class="t" style="left:1873.5px;width:129.2px;text-align:right;top:549.6px;font-size:15px;color:#111">54.51787841</div>
<div class="abs" style="left:901px;top:576.1px;width:33.1px;height:40.3px;background:linear-gradient(90deg,#f0f0f0,#fbfbfb 50%,#f0f0f0);border-bottom:1px solid #b2b2b2"></div>
<div class="abs" style="left:933.1px;top:576.1px;width:1px;height:40.3px;background:#a8a8a8"></div>
<div class="t" style="left:904px;top:589.9px;font-size:15px;color:#111">9</div>
<div class="abs" style="left:934.1px;top:576.1px;width:1073.6px;height:40.3px;background:#ffffff;border-bottom:1px solid #d0d0d0"></div>
<div class="abs" style="left:934.1px;top:576.1px;width:1px;height:40.3px;background:#d0d0d0"></div>
<div class="t" style="left:939.1px;top:589.9px;font-size:15px;color:#111">Ennerdale-Dodd</div>
<div class="abs" style="left:1068.3px;top:576.1px;width:1px;height:40.3px;background:#d0d0d0"></div>
<div class="t" style="left:1073.3px;top:589.9px;font-size:15px;color:#111">N</div>
<div class="abs" style="left:1202.5px;top:576.1px;width:1px;height:40.3px;background:#d0d0d0"></div>
<div class="t" style="left:1207.5px;top:589.9px;font-size:15px;color:#111">Sunday Augt. 1st</div>
<div class="abs" style="left:1336.7px;top:576.1px;width:1px;height:40.3px;background:#d0d0d0"></div>
<div class="t" style="left:1341.7px;top:589.9px;font-size:15px;color:#111">1/8/1802</div>
<div class="abs" style="left:1470.9px;top:576.1px;width:1px;height:40.3px;background:#d0d0d0"></div>
<div class="t" style="left:1475.9px;top:589.9px;font-size:15px;color:#111">Starling Dodd</div>
<div class="abs" style="left:1605.1px;top:576.1px;width:1px;height:40.3px;background:#d0d0d0"></div>
<div class="abs" style="left:1739.3px;top:576.1px;width:1px;height:40.3px;background:#d0d0d0"></div>
<div class="t" style="left:1739.3px;width:129.2px;text-align:right;top:589.9px;font-size:15px;color:#111">-3.322654793</div>
<div class="abs" style="left:1873.5px;top:576.1px;width:1px;height:40.3px;background:#d0d0d0"></div>
<div class="t" style="left:1873.5px;width:129.2px;text-align:right;top:589.9px;font-size:15px;color:#111">54.52755438</div>
<div class="abs" style="left:901px;top:616.4px;width:33.1px;height:40.3px;background:linear-gradient(90deg,#f0f0f0,#fbfbfb 50%,#f0f0f0);border-bottom:1px solid #b2b2b2"></div>
<div class="abs" style="left:933.1px;top:616.4px;width:1px;height:40.3px;background:#a8a8a8"></div>
<div class="t" style="left:904px;top:630.2px;font-size:15px;color:#111">10</div>
<div class="abs" style="left:934.1px;top:616.4px;width:1073.6px;height:40.3px;background:#e9e7e4;border-bottom:1px solid #d0d0d0"></div>
<div class="abs" style="left:934.1px;top:616.4px;width:1px;height:40.3px;background:#d0d0d0"></div>
<div class="t" style="left:939.1px;top:630.2px;font-size:15px;color:#111">Crummock</div>
<div class="abs" style="left:1068.3px;top:616.4px;width:1px;height:40.3px;background:#d0d0d0"></div>
<div class="t" style="left:1073.3px;top:630.2px;font-size:15px;color:#111">N</div>
<div class="abs" style="left:1202.5px;top:616.4px;width:1px;height:40.3px;background:#d0d0d0"></div>
<div class="t" style="left:1207.5px;top:630.2px;font-size:15px;color:#111">Sunday Augt. 1st</div>
<div class="abs" style="left:1336.7px;top:616.4px;width:1px;height:40.3px;background:#d0d0d0"></div>
<div class="t" style="left:1341.7px;top:630.2px;font-size:15px;color:#111">1/8/1802</div>
<div class="abs" style="left:1470.9px;top:616.4px;width:1px;height:40.3px;background:#d0d0d0"></div>
<div class="t" style="left:1475.9px;top:630.2px;font-size:15px;color:#111">Crummock Wa...</div>
<div class="abs" style="left:1605.1px;top:616.4px;width:1px;height:40.3px;background:#d0d0d0"></div>
<div class="abs" style="left:1739.3px;top:616.4px;width:1px;height:40.3px;background:#d0d0d0"></div>
<div class="t" style="left:1739.3px;width:129.2px;text-align:right;top:630.2px;font-size:15px;color:#111">-3.308069241</div>
<div class="abs" style="left:1873.5px;top:616.4px;width:1px;height:40.3px;background:#d0d0d0"></div>
<div class="t" style="left:1873.5px;width:129.2px;text-align:right;top:630.2px;font-size:15px;color:#111">54.55467638</div>
<div class="abs" style="left:901px;top:656.7px;width:33.1px;height:40.3px;background:linear-gradient(90deg,#f0f0f0,#fbfbfb 50%,#f0f0f0);border-bottom:1px solid #b2b2b2"></div>
<div class="abs" style="left:933.1px;top:656.7px;width:1px;height:40.3px;background:#a8a8a8"></div>
<div class="t" style="left:904px;top:670.5px;font-size:15px;color:#111">11</div>
<div class="abs" style="left:934.1px;top:656.7px;width:1073.6px;height:40.3px;background:#ffffff;border-bottom:1px solid #d0d0d0"></div>
<div class="abs" style="left:934.1px;top:656.7px;width:1px;height:40.3px;background:#d0d0d0"></div>
<div class="t" style="left:939.1px;top:670.5px;font-size:15px;color:#111">Buttermere</div>
<div class="abs" style="left:1068.3px;top:656.7px;width:1px;height:40.3px;background:#d0d0d0"></div>
<div class="t" style="left:1073.3px;top:670.5px;font-size:15px;color:#111">N</div>
<div class="abs" style="left:1202.5px;top:656.7px;width:1px;height:40.3px;background:#d0d0d0"></div>
<div class="t" style="left:1207.5px;top:670.5px;font-size:15px;color:#111">Sunday Augt. 1st</div>
<div class="abs" style="left:1336.7px;top:656.7px;width:1px;height:40.3px;background:#d0d0d0"></div>
<div class="t" style="left:1341.7px;top:670.5px;font-size:15px;color:#111">1/8/1802</div>
<div class="abs" style="left:1470.9px;top:656.7px;width:1px;height:40.3px;background:#d0d0d0"></div>
<div class="t" style="left:1475.9px;top:670.5px;font-size:15px;color:#111">Buttermere</div>
<div class="abs" style="left:1605.1px;top:656.7px;width:1px;height:40.3px;background:#d0d0d0"></div>
<div class="t" style="left:1610.1px;top:670.5px;font-size:15px;color:#111">Unclear</div>
<div class="abs" style="left:1739.3px;top:656.7px;width:1px;height:40.3px;background:#d0d0d0"></div>
<div class="t" style="left:1739.3px;width:129.2px;text-align:right;top:670.5px;font-size:15px;color:#111">-3.268866588</div>
<div class="abs" style="left:1873.5px;top:656.7px;width:1px;height:40.3px;background:#d0d0d0"></div>
<div class="t" style="left:1873.5px;width:129.2px;text-align:right;top:670.5px;font-size:15px;color:#111">54.53711843</div>
<div class="abs" style="left:901px;top:697.0px;width:33.1px;height:40.3px;background:linear-gradient(90deg,#f0f0f0,#fbfbfb 50%,#f0f0f0);border-bottom:1px solid #b2b2b2"></div>
<div class="abs" style="left:933.1px;top:697.0px;width:1px;height:40.3px;background:#a8a8a8"></div>
<div class="t" style="left:904px;top:710.8px;font-size:15px;color:#111">12</div>
<div class="abs" style="left:934.1px;top:697.0px;width:1073.6px;height:40.3px;background:#e9e7e4;border-bottom:1px solid #d0d0d0"></div>
<div class="abs" style="left:934.1px;top:697.0px;width:1px;height:40.3px;background:#d0d0d0"></div>
<div class="t" style="left:939.1px;top:710.8px;font-size:15px;color:#111">Saddleback</div>
<div class="abs" style="left:1068.3px;top:697.0px;width:1px;height:40.3px;background:#d0d0d0"></div>
<div class="t" style="left:1073.3px;top:710.8px;font-size:15px;color:#111">N</div>
<div class="abs" style="left:1202.5px;top:697.0px;width:1px;height:40.3px;background:#d0d0d0"></div>
<div class="t" style="left:1207.5px;top:710.8px;font-size:15px;color:#111">Sunday Augt. 1st</div>
<div class="abs" style="left:1336.7px;top:697.0px;width:1px;height:40.3px;background:#d0d0d0"></div>
<div class="t" style="left:1341.7px;top:710.8px;font-size:15px;color:#111">1/8/1802</div>
<div class="abs" style="left:1470.9px;top:697.0px;width:1px;height:40.3px;background:#d0d0d0"></div>
<div class="t" style="left:1475.9px;top:710.8px;font-size:15px;color:#111">Saddleback or ...</div>
<div class="abs" style="left:1605.1px;top:697.0px;width:1px;height:40.3px;background:#d0d0d0"></div>
<div class="abs" style="left:1739.3px;top:697.0px;width:1px;height:40.3px;background:#d0d0d0"></div>
<div class="t" style="left:1739.3px;width:129.2px;text-align:right;top:710.8px;font-size:15px;color:#111">-3.047339666</div>
<div class="abs" style="left:1873.5px;top:697.0px;width:1px;height:40.3px;background:#d0d0d0"></div>
<div class="t" style="left:1873.5px;width:129.2px;text-align:right;top:710.8px;font-size:15px;color:#111">54.63810131</div>
<div class="abs" style="left:901px;top:737.3px;width:33.1px;height:40.3px;background:linear-gradient(90deg,#f0f0f0,#fbfbfb 50%,#f0f0f0);border-bottom:1px solid #b2b2b2"></div>
<div class="abs" style="left:933.1px;top:737.3px;width:1px;height:40.3px;background:#a8a8a8"></div>
<div class="t" style="left:904px;top:751.1px;font-size:15px;color:#111">13</div>
<div class="abs" style="left:934.1px;top:737.3px;width:1073.6px;height:40.3px;background:#ffffff;border-bottom:1px solid #d0d0d0"></div>
<div class="abs" style="left:934.1px;top:737.3px;width:1px;height:40.3px;background:#d0d0d0"></div>
<div class="t" style="left:939.1px;top:751.1px;font-size:15px;color:#111">Buttermere</div>
<div class="abs" style="left:1068.3px;top:737.3px;width:1px;height:40.3px;background:#d0d0d0"></div>
<div class="t" style="left:1073.3px;top:751.1px;font-size:15px;color:#111">N</div>
<div class="abs" style="left:1202.5px;top:737.3px;width:1px;height:40.3px;background:#d0d0d0"></div>
<div class="t" style="left:1207.5px;top:751.1px;font-size:15px;color:#111">Sunday Augt. 1st</div>
<div class="abs" style="left:1336.7px;top:737.3px;width:1px;height:40.3px;background:#d0d0d0"></div>
<div class="t" style="left:1341.7px;top:751.1px;font-size:15px;color:#111">1/8/1802</div>
<div class="abs" style="left:1470.9px;top:737.3px;width:1px;height:40.3px;background:#d0d0d0"></div>
<div class="t" style="left:1475.9px;top:751.1px;font-size:15px;color:#111">Buttermere</div>
<div class="abs" style="left:1605.1px;top:737.3px;width:1px;height:40.3px;background:#d0d0d0"></div>
<div class="t" style="left:1610.1px;top:751.1px;font-size:15px;color:#111">Unclear</div>
<div class="abs" style="left:1739.3px;top:737.3px;width:1px;height:40.3px;background:#d0d0d0"></div>
<div class="t" style="left:1739.3px;width:129.2px;text-align:right;top:751.1px;font-size:15px;color:#111">-3.268866588</div>
<div class="abs" style="left:1873.5px;top:737.3px;width:1px;height:40.3px;background:#d0d0d0"></div>
<div class="t" style="left:1873.5px;width:129.2px;text-align:right;top:751.1px;font-size:15px;color:#111">54.53711843</div>
<div class="abs" style="left:901px;top:777.6px;width:33.1px;height:30.4px;background:linear-gradient(90deg,#f0f0f0,#fbfbfb 50%,#f0f0f0);border-bottom:1px solid #b2b2b2"></div>
<div class="abs" style="left:933.1px;top:777.6px;width:1px;height:30.4px;background:#a8a8a8"></div>
<div class="t" style="left:904px;top:791.4px;font-size:15px;color:#111">14</div>
<div class="abs" style="left:934.1px;top:777.6px;width:1073.6px;height:30.4px;background:#e9e7e4;border-bottom:1px solid #d0d0d0"></div>
<div class="abs" style="left:934.1px;top:777.6px;width:1px;height:30.4px;background:#d0d0d0"></div>
<div class="t" style="left:939.1px;top:791.4px;font-size:15px;color:#111">Buttermere</div>
<div class="abs" style="left:1068.3px;top:777.6px;width:1px;height:30.4px;background:#d0d0d0"></div>
<div class="t" style="left:1073.3px;top:791.4px;font-size:15px;color:#111">N</div>
<div class="abs" style="left:1202.5px;top:777.6px;width:1px;height:30.4px;background:#d0d0d0"></div>
<div class="t" style="left:1207.5px;top:791.4px;font-size:15px;color:#111">Sunday Augt. 1st</div>
<div class="abs" style="left:1336.7px;top:777.6px;width:1px;height:30.4px;background:#d0d0d0"></div>
<div class="t" style="left:1341.7px;top:791.4px;font-size:15px;color:#111">1/8/1802</div>
<div class="abs" style="left:1470.9px;top:777.6px;width:1px;height:30.4px;background:#d0d0d0"></div>
<div class="t" style="left:1475.9px;top:791.4px;font-size:15px;color:#111">Buttermere</div>
<div class="abs" style="left:1605.1px;top:777.6px;width:1px;height:30.4px;background:#d0d0d0"></div>
<div class="t" style="left:1610.1px;top:791.4px;font-size:15px;color:#111">Unclear</div>
<div class="abs" style="left:1739.3px;top:777.6px;width:1px;height:30.4px;background:#d0d0d0"></div>
<div class="t" style="left:1739.3px;width:129.2px;text-align:right;top:791.4px;font-size:15px;color:#111">-3.268866588</div>
<div class="abs" style="left:1873.5px;top:777.6px;width:1px;height:30.4px;background:#d0d0d0"></div>
<div class="t" style="left:1873.5px;width:129.2px;text-align:right;top:791.4px;font-size:15px;color:#111">54.53711843</div>
<div class="abs" style="left:2008px;top:229px;width:19px;height:579px;background:#e9e9e9;border-left:1px solid #d5d5d5"></div>
<div class="abs" style="left:2009px;top:229px;width:18px;height:19px;background:#fff;border-bottom:1px solid #dcdcdc"></div>
<div class="abs" style="left:2009px;top:248px;width:18px;height:36px;background:#fff"></div>
<div class="abs" style="left:2009px;top:789px;width:18px;height:19px;background:#fff;border-top:1px solid #dcdcdc"></div>
<svg style="left:2012px;top:234px" width="12" height="8"><path d="M1 6 L6 1 L11 6 Z" fill="#444"/></svg>
<svg style="left:2012px;top:794px" width="12" height="8"><path d="M1 1 L6 6 L11 1 Z" fill="#444"/></svg>
<div class="abs" style="left:905px;top:810px;width:159px;height:30px;background:linear-gradient(#fafafa,#ececec);border:1px solid #c4c4c4;border-radius:3px"></div>
<div class="t" style="left:936px;top:818px;font-size:14.5px;color:#111">Show All Features</div>
<svg style="left:909px;top:195px" width="22" height="22"><path d="M3 20 L5 13 L15 2 L18 5 L8 16 Z" fill="#dcdcdc"/></svg>
<svg style="left:944px;top:195px" width="22" height="22"><rect x="2" y="3" width="16" height="16" fill="#dadad4"/><path d="M2 8 L18 8 M2 13 L18 13" stroke="#eee"/><path d="M9 17 L11 11 L19 2 L21 4 L13 13 Z" fill="#cfcfcf"/></svg>
<svg style="left:977px;top:195px" width="22" height="22"><rect x="2" y="2" width="17" height="18" rx="1.5" fill="#d9d9d9"/><rect x="5" y="2" width="11" height="7" fill="#e8e8e8"/><rect x="6" y="13" width="9" height="6" fill="#e8e8e8"/></svg>
<svg style="left:1010px;top:195px" width="22" height="22"><path d="M2 10 A9 9 0 0 1 18 5 L20 2 L20 10 L12 10 L15 7.5 A5.5 5.5 0 0 0 6 10 Z" fill="#4a86c8"/><path d="M20 12 A9 9 0 0 1 4 17 L2 20 L2 12 L10 12 L7 14.5 A5.5 5.5 0 0 0 16 12 Z" fill="#5e97d6"/></svg>
<svg style="left:1052px;top:195px" width="22" height="22"><path d="M8 2 L15 2 L19 6 L19 16 L8 16 Z" fill="#f2f2f2" stroke="#bbb"/><path d="M3 6 L11 6 L15 10 L15 20 L3 20 Z" fill="#f2f2f2" stroke="#aaa"/></svg>
<svg style="left:1097px;top:195px" width="22" height="22"><text x="1" y="13" font-size="15" fill="#6b4d20" font-family="Liberation Serif">&#949;</text><rect x="8" y="9" width="12" height="11" rx="1" fill="#f0d43c" stroke="#b89a20" stroke-width="0.8"/></svg>
<svg style="left:1130px;top:195px" width="22" height="22"><rect x="2" y="3" width="18" height="4.5" rx="1" fill="#f0d43c" stroke="#b89a20" stroke-width="0.8"/><rect x="2" y="9" width="18" height="4.5" rx="1" fill="#f0d43c" stroke="#b89a20" stroke-width="0.8"/><rect x="2" y="15" width="18" height="4.5" rx="1" fill="#f0d43c" stroke="#b89a20" stroke-width="0.8"/></svg>
<svg style="left:1164px;top:195px" width="22" height="22"><rect x="2" y="2" width="18" height="18" fill="#f5f5f5" stroke="#888" stroke-width="1"/><path d="M2 2 L20 20 L2 20 Z" fill="#f0d43c"/></svg>
<svg style="left:1197px;top:195px" width="22" height="22"><rect x="2" y="2" width="14" height="13" rx="1" fill="#f0d43c" stroke="#b89a20" stroke-width="0.8"/><circle cx="16" cy="16" r="5" fill="#e0413a"/><circle cx="16" cy="16" r="2.5" fill="none" stroke="#fff" stroke-width="1"/></svg>
<svg style="left:1230px;top:195px" width="22" height="22"><path d="M2 3 L20 3 L12 11 L12 21 L10 21 L10 11 Z" fill="#6a97c9"/><rect x="2" y="2" width="18" height="3" fill="#e8cf55"/></svg>
<svg style="left:1264px;top:195px" width="22" height="22"><rect x="2" y="2" width="18" height="18" fill="#6d9bd1"/><rect x="2" y="12" width="18" height="8" fill="#e8cf55"/><path d="M11 3 L16 8 L13 8 L13 16 L9 16 L9 8 L6 8 Z" fill="#fff"/></svg>
<svg style="left:1298px;top:195px" width="22" height="22"><rect x="6" y="6" width="10" height="10" fill="#f0d43c"/><path d="M11 0 L15 5 L7 5 Z M11 22 L15 17 L7 17 Z M0 11 L5 7 L5 15 Z M22 11 L17 7 L17 15 Z" fill="#4f86c6"/><path d="M11 3 L11 19 M3 11 L19 11" stroke="#4f86c6" stroke-width="2.5"/></svg>
<svg style="left:1330px;top:195px" width="22" height="22"><rect x="2" y="2" width="8" height="18" fill="#f0d43c"/><path d="M2 21 L8 15" stroke="#e0b84a" stroke-width="3.5"/><circle cx="13" cy="9" r="7" fill="#eee" stroke="#555" stroke-width="1.4"/></svg>
<svg style="left:1375px;top:195px" width="22" height="22"><rect x="3" y="3" width="12" height="16" fill="#ececec" stroke="#d8d8d8"/><rect x="11" y="12" width="9" height="9" fill="#e4e4e4"/></svg>
<svg style="left:1409px;top:195px" width="22" height="22"><rect x="3" y="3" width="12" height="16" fill="#ececec" stroke="#d8d8d8"/><rect x="11" y="12" width="9" height="9" fill="#e4e4e4"/></svg>
<svg style="left:1441px;top:195px" width="22" height="22"><rect x="2" y="3" width="19" height="17" fill="#eef2f8" stroke="#777" stroke-width="1"/><path d="M2 7 L21 7 M2 11 L21 11 M2 15 L21 15" stroke="#6d9bd1" stroke-width="1.2"/><circle cx="6" cy="5" r="1" fill="#e05a4a"/><circle cx="12" cy="5" r="1" fill="#e05a4a"/><circle cx="18" cy="5" r="1" fill="#e05a4a"/></svg>
<svg style="left:1485px;top:195px" width="22" height="22"><rect x="2" y="3" width="19" height="17" fill="#f5f5f5" stroke="#aaa" stroke-width="0.8"/><rect x="3" y="8" width="17" height="5" fill="#7cbf6a"/><rect x="3" y="15" width="17" height="4" fill="#f2d6d6"/><path d="M4 17 L8 17" stroke="#d33" stroke-width="1.5"/></svg>
<svg style="left:1527px;top:195px" width="22" height="22"><rect x="2" y="3" width="19" height="17" fill="#eef2f8" stroke="#888" stroke-width="1"/><rect x="2" y="3" width="19" height="4" fill="#777"/><rect x="10" y="10" width="10" height="9" fill="#dce6f2" stroke="#8aa8cf"/></svg>
<svg style="left:1560px;top:195px" width="22" height="22"><circle cx="10" cy="9" r="7.5" fill="#dbe6f2" stroke="#7f9fc9" stroke-width="1.5"/><circle cx="10" cy="9" r="4" fill="#4f86c6"/><path d="M14 14 L20 21" stroke="#888" stroke-width="2.5"/></svg>
<div class="abs" style="left:1045px;top:197px;width:1px;height:19px;background:#d2d2d2"></div>
<div class="abs" style="left:1088px;top:197px;width:1px;height:19px;background:#d2d2d2"></div>
<div class="abs" style="left:1365px;top:197px;width:1px;height:19px;background:#d2d2d2"></div>
<div class="abs" style="left:1475px;top:197px;width:1px;height:19px;background:#d2d2d2"></div>
<div class="abs" style="left:1518px;top:197px;width:1px;height:19px;background:#d2d2d2"></div>
<svg style="left:909px;top:153px" width="26" height="26"><circle cx="12" cy="12" r="8.2" fill="none" stroke="#7ab043" stroke-width="3.6"/><path d="M15 15 L22 22" stroke="#5a9a30" stroke-width="4" stroke-linecap="round"/><circle cx="12" cy="12" r="2.6" fill="#f2b03a"/><circle cx="12" cy="12" r="1.2" fill="#e0412a"/></svg>
<div class="abs" style="left:1868px;top:165px;width:15px;height:1px;background:#666"></div>
<div class="abs" style="left:1929px;top:158px;width:14px;height:14px;border:1px solid #555"></div>
<svg style="left:1989px;top:157px" width="17" height="17"><path d="M1.5 1.5 L15.5 15.5 M15.5 1.5 L1.5 15.5" stroke="#666" stroke-width="1.1"/></svg>
<svg style="left:912px;top:814px" width="20" height="22"><path d="M1 3 L19 3 L11.5 11 L11.5 20 L8.5 20 L8.5 11 Z" fill="#6a97c9"/><rect x="1" y="2" width="18" height="3" fill="#e8cf55"/></svg>
<svg style="left:1053px;top:830px" width="8" height="5"><path d="M0.5 0.5 L7.5 0.5 L4 4 Z" fill="#444"/></svg>
<svg style="left:1966px;top:815px" width="20" height="20"><rect x="1" y="1" width="18" height="18" fill="#dfe9f5" stroke="#9ab8dc" stroke-width="1"/><rect x="7" y="4" width="10" height="5" fill="#f4f8fc" stroke="#6d9bd1" stroke-width="1"/><rect x="7" y="11" width="10" height="5" fill="#f4f8fc" stroke="#6d9bd1" stroke-width="1"/><path d="M3 6.5 L6 6.5 M3 13.5 L6 13.5" stroke="#333" stroke-width="1.3"/></svg>
<div class="abs" style="left:1993px;top:810px;width:31px;height:31px;background:#dcdcdc;border:1px solid #b9b9b9;border-radius:3px"></div>
<svg style="left:1998px;top:815px" width="21" height="21"><rect x="1" y="1" width="19" height="19" fill="#dfe9f5" stroke="#6d9bd1" stroke-width="1.2"/><rect x="1" y="1" width="19" height="4" fill="#6d9bd1"/><path d="M2 9 L19 9 M2 13 L19 13 M2 17 L19 17 M8 5 L8 20" stroke="#6d9bd1" stroke-width="1"/></svg>
</body></html>
